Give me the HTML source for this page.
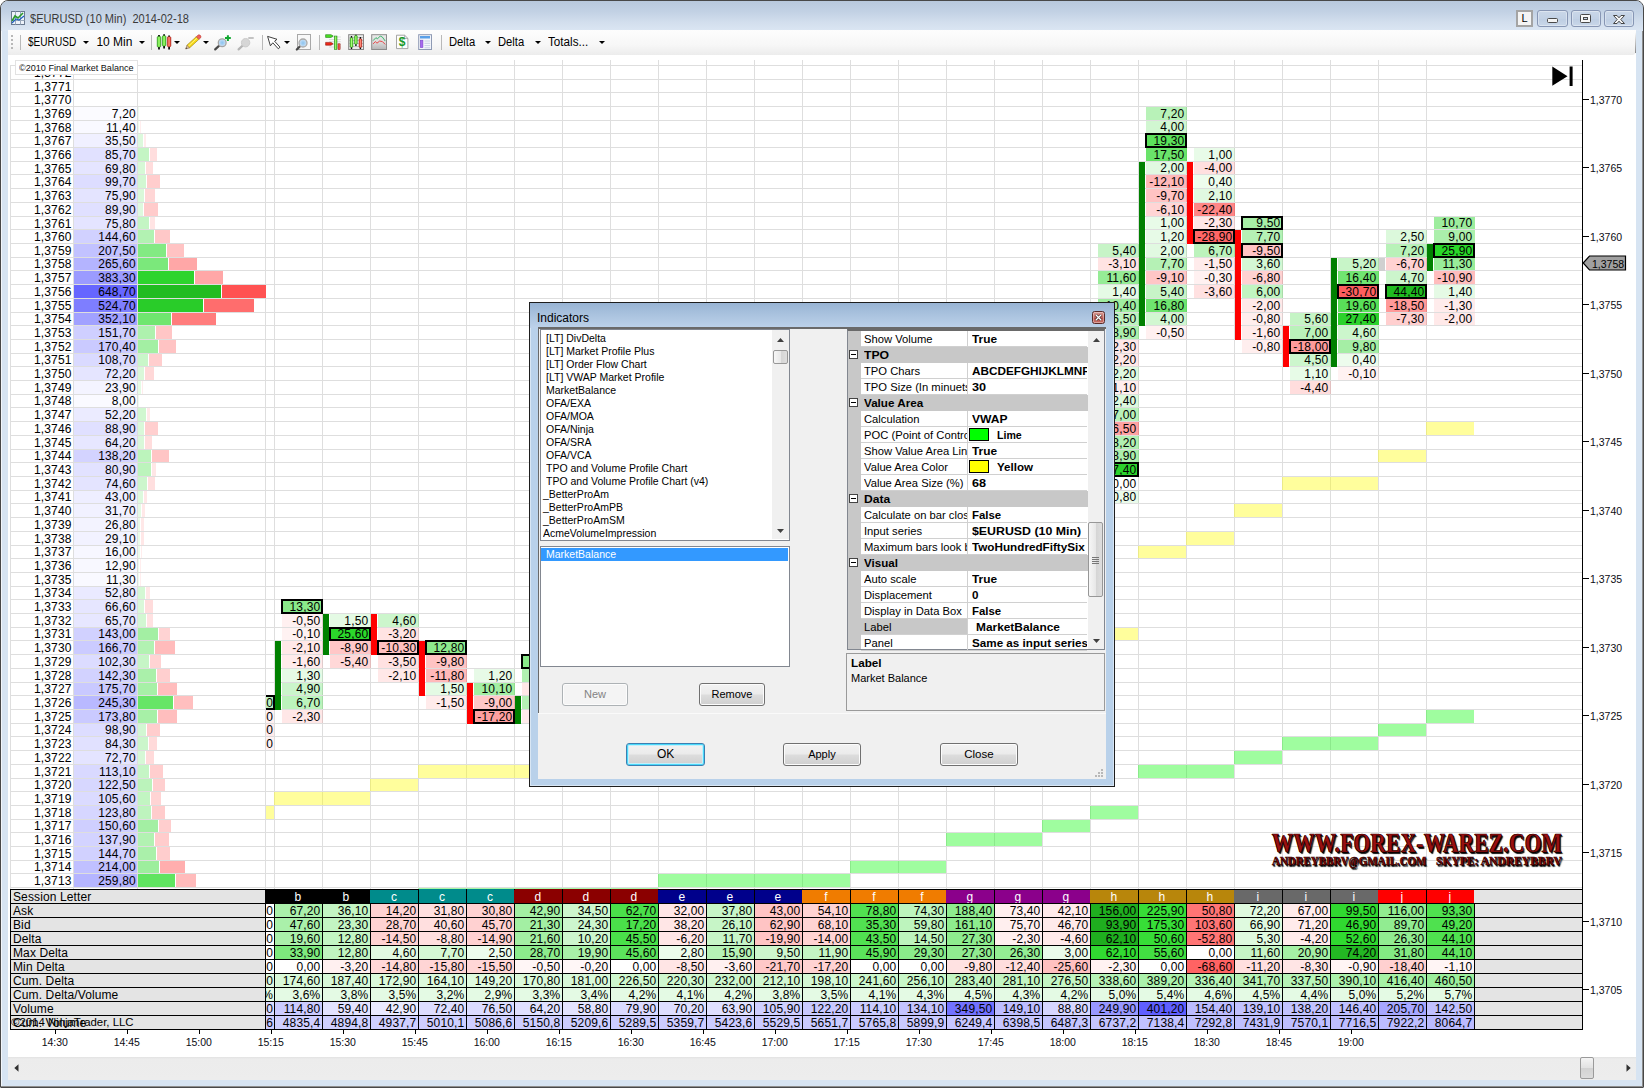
<!DOCTYPE html>
<html><head><meta charset="utf-8"><title>chart</title><style>
html,body{margin:0;padding:0;}
body{width:1644px;height:1088px;overflow:hidden;background:#fff;font-family:"Liberation Sans",sans-serif;position:relative;}
div{position:absolute;box-sizing:border-box;white-space:nowrap;}
svg{position:absolute;overflow:visible;}
.hl{left:10px;width:1572px;height:1px;background:#dedede;}
.vl{top:60px;width:1px;height:829px;background:#dedede;}
.lp{font-size:12px;letter-spacing:.15px;line-height:13.7px;height:13.7px;text-align:right;color:#000;padding-top:1.4px;}
.fc{font-size:12px;letter-spacing:.15px;line-height:13.7px;height:13.69px;text-align:right;color:#000;padding-right:2.4px;padding-top:1.0px;}
.bx{box-shadow:inset 0 0 0 1.6px #000,0 0 0 .6px #000;}
.tc{font-size:12px;letter-spacing:.15px;line-height:14px;height:14px;text-align:right;color:#000;padding-right:1.6px;}
.tl{font-size:12px;line-height:14px;height:14px;color:#000;letter-spacing:.12px;}
.ax{font-size:10.5px;line-height:12px;height:12px;color:#0c0c14;}
.tb{font-size:12px;line-height:14px;color:#000;transform-origin:0 50%;}
.li{font-size:11px;line-height:13px;height:13px;color:#000;transform:scaleX(.955);transform-origin:0 50%;}
.pn{font-size:11px;line-height:16px;height:16px;color:#000;}
.pv{font-size:11px;line-height:16px;height:16px;color:#000;font-weight:bold;}
.pv span{display:inline-block;transform-origin:0 50%;}
.btn{font-size:11px;line-height:21px;text-align:center;border:1px solid #707070;border-radius:3px;background:linear-gradient(#f2f2f2 0,#ebebeb 48%,#dddddd 52%,#cfcfcf 100%);color:#000;box-shadow:inset 0 0 0 1px #fcfcfc;}
</style></head><body>
<div style="left:0;top:0;width:1644px;height:1088px;border-radius:8px 8px 1px 1px;background:#d7e4f2;border:1px solid #484848;box-shadow:inset -1px -1px 0 #8e8e8e,inset 1px 0 0 #f2f6fb;"></div>
<div style="left:1px;top:1px;width:1642px;height:30px;border-radius:7px 7px 0 0;background:linear-gradient(#b8c8dc 0,#c2d1e4 35%,#d2deed 70%,#dbe6f3 100%);"></div>
<div style="left:8px;top:30px;width:1628px;height:1050px;background:#fff;"></div>
<svg style="left:11px;top:11px" width="14" height="14" viewBox="0 0 14 14"><rect x="0.5" y="0.5" width="13" height="13" fill="#eef3fa" stroke="#6a7a90"/><path d="M0.5 9.5H13.5M4.5 .5V13.5M9.5 .5V13.5" stroke="#9aa8bb" stroke-width="1" fill="none"/><path d="M1 10L4 5L7 7L12 2" stroke="#2a9a2a" stroke-width="1.6" fill="none"/><path d="M1 12L5 8L8 9L13 5" stroke="#2060c0" stroke-width="1.2" fill="none"/></svg>
<div class="tb" id="ttl" style="transform:scaleX(.92);left:30px;top:11.8px;color:#3a3a3a;font-size:12px;">$EURUSD (10 Min)&nbsp; 2014-02-18</div>
<div style="left:1516px;top:10px;width:17px;height:17px;border:2px solid #a4a4a4;background:#f4f4f4;font-size:11px;line-height:13px;text-align:center;color:#000;">L</div>
<div style="left:1537.0px;top:10px;width:30.5px;height:17px;border:1px solid #8796b4;border-radius:3px;background:linear-gradient(#cad7e8,#c2d1e5 50%,#bdcde2 51%,#c9d7e9);box-shadow:inset 0 0 0 1px rgba(255,255,255,.35);"><div style="left:9px;top:7px;width:11px;height:5px;border:1px solid #4a4a4a;background:#f4f4f4;border-radius:1.5px"></div></div>
<div style="left:1570.5px;top:10px;width:30.5px;height:17px;border:1px solid #8796b4;border-radius:3px;background:linear-gradient(#cad7e8,#c2d1e5 50%,#bdcde2 51%,#c9d7e9);box-shadow:inset 0 0 0 1px rgba(255,255,255,.35);"><div style="left:8px;top:3px;width:11px;height:9px;border:1px solid #4a4a4a;background:#f8f8f8;border-radius:1.5px"></div><div style="left:11px;top:6px;width:5px;height:3px;border:1px solid #4a4a4a;background:#c9d6e6"></div></div>
<div style="left:1603.5px;top:10px;width:30.5px;height:17px;border:1px solid #8796b4;border-radius:3px;background:linear-gradient(#cad7e8,#c2d1e5 50%,#bdcde2 51%,#c9d7e9);box-shadow:inset 0 0 0 1px rgba(255,255,255,.35);"><svg style="left:8.5px;top:3.5px" width="12" height="9" viewBox="0 0 12 9"><path d="M0.5 0.5H4L6 2.8L8 0.5H11.5L7.8 4.5L11.5 8.5H8L6 6.2L4 8.5H0.5L4.2 4.5Z" fill="#f6f6f6" stroke="#454545" stroke-width="1" stroke-linejoin="round"/></svg></div>
<div style="left:8px;top:30px;width:1628px;height:25px;background:linear-gradient(#fdfdfd 0,#f7f7f7 60%,#ececec 100%);border-radius:0 0 4px 0;"></div>
<div style="left:1635px;top:32px;width:1px;height:21px;background:linear-gradient(rgba(120,120,120,0),rgba(110,110,110,.8));"></div>
<div style="left:11px;top:35px;width:2px;height:2px;background:#b8b8b8;"></div>
<div style="left:11px;top:39px;width:2px;height:2px;background:#b8b8b8;"></div>
<div style="left:11px;top:43px;width:2px;height:2px;background:#b8b8b8;"></div>
<div style="left:11px;top:47px;width:2px;height:2px;background:#b8b8b8;"></div>
<div style="left:20.0px;top:35px;width:1px;height:15px;background:#b9b9b9;"></div>
<div class="tb" id="t1" style="transform:scaleX(.84);left:28px;top:35px;">$EURUSD</div>
<svg style="left:82.5px;top:40.8px" width="6" height="3" viewBox="0 0 6 3"><path d="M0 0H6L3 3Z" fill="#000"/></svg>
<div class="tb" id="t2" style="left:96.4px;top:35px;">10 Min</div>
<svg style="left:138.5px;top:40.8px" width="6" height="3" viewBox="0 0 6 3"><path d="M0 0H6L3 3Z" fill="#000"/></svg>
<div style="left:151.0px;top:35px;width:1px;height:15px;background:#b9b9b9;"></div>
<svg style="left:173.7px;top:40.8px" width="6" height="3" viewBox="0 0 6 3"><path d="M0 0H6L3 3Z" fill="#000"/></svg>
<svg style="left:202.8px;top:40.8px" width="6" height="3" viewBox="0 0 6 3"><path d="M0 0H6L3 3Z" fill="#000"/></svg>
<svg style="left:284.0px;top:40.8px" width="6" height="3" viewBox="0 0 6 3"><path d="M0 0H6L3 3Z" fill="#000"/></svg>
<div style="left:261.5px;top:35px;width:1px;height:15px;background:#b9b9b9;"></div>
<div style="left:319.3px;top:35px;width:1px;height:15px;background:#b9b9b9;"></div>
<svg style="left:150px;top:30px" width="290" height="25" viewBox="150 30 290 25">
<defs>
<linearGradient id="gg" x1="0" x2="1" y1="0" y2="0"><stop offset="0" stop-color="#3cc818"/><stop offset=".5" stop-color="#a8ff78"/><stop offset="1" stop-color="#3cc818"/></linearGradient>
<linearGradient id="rg" x1="0" x2="1" y1="0" y2="0"><stop offset="0" stop-color="#e02818"/><stop offset=".5" stop-color="#ff9080"/><stop offset="1" stop-color="#e02818"/></linearGradient>
<radialGradient id="lens"><stop offset="0" stop-color="#8cc4f0"/><stop offset=".7" stop-color="#b8d8f4"/><stop offset="1" stop-color="#e4ecf4"/></radialGradient>
<linearGradient id="gr3" x1="0" x2="0" y1="0" y2="1"><stop offset="0" stop-color="#ececec"/><stop offset=".55" stop-color="#d8d8d8"/><stop offset="1" stop-color="#b4b4b4"/></linearGradient>
</defs>
<g stroke="#111" stroke-width="1.8"><path d="M159 35V49.4M164.1 34.3V48.4M169.1 35.4V49.4"/></g>
<rect x="157.2" y="36.4" width="3.6" height="10.7" rx="1" fill="url(#gg)" stroke="#1c7a10" stroke-width=".5"/>
<rect x="162.3" y="35.7" width="3.6" height="10.3" rx="1" fill="url(#gg)" stroke="#1c7a10" stroke-width=".5"/>
<rect x="167.3" y="36.7" width="3.6" height="10" rx="1" fill="url(#rg)" stroke="#901810" stroke-width=".5"/>
<path d="M186.95 45.23L196.35 36.63L198.85 39.37L189.45 47.97Z" fill="#f8dc18" stroke="#a08410" stroke-width=".7"/>
<path d="M188.2 46.4L197.4 37.8" stroke="#fff08a" stroke-width=".9"/>
<path d="M185.6 49L186.95 45.23L189.45 47.97Z" fill="#dcc09a" stroke="#806040" stroke-width=".5"/>
<path d="M185.6 49L186.3 47.2L187.4 48.4Z" fill="#404040"/>
<path d="M196.35 36.63L198.2 34.9Q199.9 34.3 200.9 36.1L201 37.4L198.85 39.37Z" fill="#f06058" stroke="#b03028" stroke-width=".5"/>
<path d="M215.2 49.4L219.6 45.2" stroke="#484848" stroke-width="2.2" stroke-linecap="round"/>
<circle cx="222.2" cy="42.7" r="3.9" fill="url(#lens)" stroke="#a4a4a4" stroke-width="1.3"/>
<path d="M227.9 35.2V41M225 38.1H230.8" stroke="#10a830" stroke-width="2"/>
<path d="M238.6 49.4L243 45.2" stroke="#b4b4b4" stroke-width="2.2" stroke-linecap="round"/>
<circle cx="245.6" cy="42.7" r="4.2" fill="#d6d6d6" stroke="#cccccc" stroke-width="1"/>
<path d="M248.3 38H253.7" stroke="#bdbdbd" stroke-width="1.8"/>
<path d="M267.6 36.4L277 39.3L274.6 41.2L280 47.2L278.3 48.8L272.8 42.8L270.4 45.8Z" fill="#fff" stroke="#2a2a2a" stroke-width=".9" stroke-linejoin="round"/>
<rect x="297.5" y="34.5" width="13" height="15" fill="#f8f8f8" stroke="#a8a8a8"/>
<path d="M296.8 49.5L300 46.2" stroke="#484848" stroke-width="2.2" stroke-linecap="round"/>
<circle cx="303" cy="43" r="4" fill="url(#lens)" stroke="#a8a8a8" stroke-width="1.3"/>
<path d="M329 37H340.8M329 39.5H340.8M329 41.7H340.8M329 44.3H340.8M329 47H340.8" stroke="#d4d4d4" stroke-width=".8"/>
<path d="M325.6 34.7H331L333.2 36L331 37.4H325.6Z" fill="#4ce424" stroke="#1c7a10" stroke-width=".6" stroke-linejoin="round"/>
<path d="M325.6 42.4H331L333.2 43.8L331 45.2H325.6Z" fill="#f02818" stroke="#901810" stroke-width=".6" stroke-linejoin="round"/>
<rect x="334.4" y="36" width="2.6" height="13.6" fill="url(#gg)" stroke="#1c7a10" stroke-width=".5"/>
<rect x="338" y="43.8" width="2.1" height="5.8" fill="url(#rg)" stroke="#901810" stroke-width=".5"/>
<rect x="348.7" y="34.7" width="14.8" height="14.8" fill="#ebebeb" stroke="#858585"/>
<path d="M349.2 37.5H363M349.2 40.5H363M349.2 43.5H363M349.2 46.5H363" stroke="#b4b4b4" stroke-width=".8"/>
<g stroke="#111" stroke-width="1.4"><path d="M351.5 36V49M355.9 34.8V46M360.4 37V49"/></g>
<rect x="350.1" y="37.7" width="2.8" height="9.6" rx=".8" fill="url(#gg)" stroke="#1c7a10" stroke-width=".4"/>
<rect x="354.5" y="35.6" width="2.8" height="8.6" rx=".8" fill="url(#gg)" stroke="#1c7a10" stroke-width=".4"/>
<rect x="359" y="38.8" width="2.8" height="8.6" rx=".8" fill="url(#rg)" stroke="#901810" stroke-width=".4"/>
<rect x="371.7" y="34.7" width="14.8" height="14.8" fill="url(#gr3)" stroke="#8c8c8c"/>
<path d="M373.1 40.6L375.9 37.7L377.5 38.8L380.3 36L382.4 37.1L385.2 41" stroke="#28b060" stroke-width=".9" fill="none"/>
<path d="M373.1 43.9L375.3 41.6L377 43.2L379.7 41L382.4 41.6L385.2 44.4" stroke="#e83838" stroke-width=".9" fill="none"/>
<path d="M396.5 35.2H404.6L407.9 38.4V48.6H396.5Z" fill="#fdfdfd" stroke="#9c9c9c" stroke-width=".9"/>
<path d="M404.6 35.2V38.4H407.9" fill="none" stroke="#9c9c9c" stroke-width=".8"/>
<text x="402" y="46.3" font-family="Liberation Sans" font-size="12" font-weight="bold" fill="#189828" text-anchor="middle">$</text>
<rect x="418.7" y="34.7" width="12.8" height="14.8" fill="#f4f6fb" stroke="#8e9ab4"/>
<rect x="420" y="36" width="10" height="2.5" fill="#5aa0e8"/>
<rect x="420.3" y="40.2" width="2.6" height="7.4" fill="#a868f0" stroke="#7a48c8" stroke-width=".6"/>
<path d="M424.5 41H430.2M424.5 43.3H430.2M424.5 45.6H430.2M424.5 47.8H430.2" stroke="#c6d0e4" stroke-width="1"/>
</svg>
<div style="left:440.5px;top:35px;width:1px;height:15px;background:#b9b9b9;"></div>
<div class="tb" id="t3" style="transform:scaleX(.935);left:448.5px;top:35px;">Delta</div>
<svg style="left:484.7px;top:40.8px" width="6" height="3" viewBox="0 0 6 3"><path d="M0 0H6L3 3Z" fill="#000"/></svg>
<div class="tb" id="t4" style="transform:scaleX(.935);left:498.3px;top:35px;">Delta</div>
<svg style="left:534.5px;top:40.8px" width="6" height="3" viewBox="0 0 6 3"><path d="M0 0H6L3 3Z" fill="#000"/></svg>
<div class="tb" id="t5" style="transform:scaleX(.972);left:548.2px;top:35px;">Totals...</div>
<svg style="left:598.5px;top:40.8px" width="6" height="3" viewBox="0 0 6 3"><path d="M0 0H6L3 3Z" fill="#000"/></svg>
<div class="hl" style="top:65px"></div>
<div class="hl" style="top:79px"></div>
<div class="hl" style="top:92px"></div>
<div class="hl" style="top:106px"></div>
<div class="hl" style="top:120px"></div>
<div class="hl" style="top:133px"></div>
<div class="hl" style="top:147px"></div>
<div class="hl" style="top:161px"></div>
<div class="hl" style="top:174px"></div>
<div class="hl" style="top:188px"></div>
<div class="hl" style="top:202px"></div>
<div class="hl" style="top:216px"></div>
<div class="hl" style="top:229px"></div>
<div class="hl" style="top:243px"></div>
<div class="hl" style="top:257px"></div>
<div class="hl" style="top:270px"></div>
<div class="hl" style="top:284px"></div>
<div class="hl" style="top:298px"></div>
<div class="hl" style="top:312px"></div>
<div class="hl" style="top:325px"></div>
<div class="hl" style="top:339px"></div>
<div class="hl" style="top:353px"></div>
<div class="hl" style="top:366px"></div>
<div class="hl" style="top:380px"></div>
<div class="hl" style="top:394px"></div>
<div class="hl" style="top:407px"></div>
<div class="hl" style="top:421px"></div>
<div class="hl" style="top:435px"></div>
<div class="hl" style="top:449px"></div>
<div class="hl" style="top:462px"></div>
<div class="hl" style="top:476px"></div>
<div class="hl" style="top:490px"></div>
<div class="hl" style="top:503px"></div>
<div class="hl" style="top:517px"></div>
<div class="hl" style="top:531px"></div>
<div class="hl" style="top:545px"></div>
<div class="hl" style="top:558px"></div>
<div class="hl" style="top:572px"></div>
<div class="hl" style="top:586px"></div>
<div class="hl" style="top:599px"></div>
<div class="hl" style="top:613px"></div>
<div class="hl" style="top:627px"></div>
<div class="hl" style="top:640px"></div>
<div class="hl" style="top:654px"></div>
<div class="hl" style="top:668px"></div>
<div class="hl" style="top:682px"></div>
<div class="hl" style="top:695px"></div>
<div class="hl" style="top:709px"></div>
<div class="hl" style="top:723px"></div>
<div class="hl" style="top:736px"></div>
<div class="hl" style="top:750px"></div>
<div class="hl" style="top:764px"></div>
<div class="hl" style="top:778px"></div>
<div class="hl" style="top:791px"></div>
<div class="hl" style="top:805px"></div>
<div class="hl" style="top:819px"></div>
<div class="hl" style="top:832px"></div>
<div class="hl" style="top:846px"></div>
<div class="hl" style="top:860px"></div>
<div class="hl" style="top:873px"></div>
<div class="hl" style="top:887px"></div>
<div class="vl" style="left:265px"></div>
<div class="vl" style="left:274px"></div>
<div class="vl" style="left:322px"></div>
<div class="vl" style="left:370px"></div>
<div class="vl" style="left:418px"></div>
<div class="vl" style="left:466px"></div>
<div class="vl" style="left:514px"></div>
<div class="vl" style="left:562px"></div>
<div class="vl" style="left:610px"></div>
<div class="vl" style="left:658px"></div>
<div class="vl" style="left:706px"></div>
<div class="vl" style="left:754px"></div>
<div class="vl" style="left:802px"></div>
<div class="vl" style="left:850px"></div>
<div class="vl" style="left:898px"></div>
<div class="vl" style="left:946px"></div>
<div class="vl" style="left:994px"></div>
<div class="vl" style="left:1042px"></div>
<div class="vl" style="left:1090px"></div>
<div class="vl" style="left:1138px"></div>
<div class="vl" style="left:1186px"></div>
<div class="vl" style="left:1234px"></div>
<div class="vl" style="left:1282px"></div>
<div class="vl" style="left:1330px"></div>
<div class="vl" style="left:1378px"></div>
<div class="vl" style="left:1426px"></div>
<div class="vl" style="left:10px;top:65px;height:824px"></div>
<div class="vl" style="left:73px;top:65px;height:824px"></div>
<div class="vl" style="left:137px;top:65px;height:824px"></div>
<div style="left:1582px;top:60px;width:1px;height:970px;background:#000"></div>
<div class="lp" style="left:20px;top:65.7px;width:51.6px">1,3772</div>
<div class="lp" style="left:20px;top:79.2px;width:51.6px">1,3771</div>
<div class="lp" style="left:20px;top:92.7px;width:51.6px">1,3770</div>
<div class="lp" style="left:20px;top:106.7px;width:51.6px">1,3769</div>
<div style="left:74px;top:107px;width:63px;height:13px;background:#fbfbff"></div>
<div class="lp" style="left:74px;top:106.7px;width:63px;padding-right:1.2px;">7,20</div>
<div style="left:138px;top:107px;width:0.6px;height:13px;background:#eefcee"></div>
<div class="lp" style="left:20px;top:120.2px;width:51.6px">1,3768</div>
<div style="left:74px;top:121px;width:63px;height:12px;background:#f9f9ff"></div>
<div class="lp" style="left:74px;top:120.2px;width:63px;padding-right:1.2px;">11,40</div>
<div style="left:138px;top:121px;width:0.9px;height:12px;background:#edfced"></div>
<div style="left:139.9px;top:121px;width:0.6px;height:12px;background:#ffeeee"></div>
<div class="lp" style="left:20px;top:133.7px;width:51.6px">1,3767</div>
<div style="left:74px;top:134px;width:63px;height:13px;background:#f0f0ff"></div>
<div class="lp" style="left:74px;top:133.7px;width:63px;padding-right:1.2px;">35,50</div>
<div style="left:138px;top:134px;width:5.3px;height:13px;background:#dcf9dc"></div>
<div style="left:144.3px;top:134px;width:1.6px;height:13px;background:#ffecec"></div>
<div class="lp" style="left:20px;top:147.7px;width:51.6px">1,3766</div>
<div style="left:74px;top:148px;width:63px;height:13px;background:#e1e1ff"></div>
<div class="lp" style="left:74px;top:147.7px;width:63px;padding-right:1.2px;">85,70</div>
<div style="left:138px;top:148px;width:11.3px;height:13px;background:#c4f5c4"></div>
<div style="left:150.3px;top:148px;width:6.7px;height:13px;background:#ffdede"></div>
<div class="lp" style="left:20px;top:161.2px;width:51.6px">1,3765</div>
<div style="left:74px;top:162px;width:63px;height:12px;background:#e5e5ff"></div>
<div class="lp" style="left:74px;top:161.2px;width:63px;padding-right:1.2px;">69,80</div>
<div style="left:138px;top:162px;width:6.9px;height:12px;background:#d6f8d6"></div>
<div style="left:145.9px;top:162px;width:7.6px;height:12px;background:#ffdcdc"></div>
<div class="lp" style="left:20px;top:174.7px;width:51.6px">1,3764</div>
<div style="left:74px;top:175px;width:63px;height:13px;background:#ddddff"></div>
<div class="lp" style="left:74px;top:174.7px;width:63px;padding-right:1.2px;">99,70</div>
<div style="left:138px;top:175px;width:7.9px;height:13px;background:#d2f7d2"></div>
<div style="left:146.9px;top:175px;width:13.2px;height:13px;background:#ffcdcd"></div>
<div class="lp" style="left:20px;top:188.7px;width:51.6px">1,3763</div>
<div style="left:74px;top:189px;width:63px;height:13px;background:#e4e4ff"></div>
<div class="lp" style="left:74px;top:188.7px;width:63px;padding-right:1.2px;">75,90</div>
<div style="left:138px;top:189px;width:6.1px;height:13px;background:#d9f8d9"></div>
<div style="left:145.1px;top:189px;width:9.7px;height:13px;background:#ffd6d6"></div>
<div class="lp" style="left:20px;top:202.7px;width:51.6px">1,3762</div>
<div style="left:74px;top:203px;width:63px;height:13px;background:#e0e0ff"></div>
<div class="lp" style="left:74px;top:202.7px;width:63px;padding-right:1.2px;">89,90</div>
<div style="left:138px;top:203px;width:4.8px;height:13px;background:#def9de"></div>
<div style="left:143.8px;top:203px;width:14.2px;height:13px;background:#ffcbcb"></div>
<div class="lp" style="left:20px;top:216.2px;width:51.6px">1,3761</div>
<div style="left:74px;top:217px;width:63px;height:12px;background:#e4e4ff"></div>
<div class="lp" style="left:74px;top:216.2px;width:63px;padding-right:1.2px;">75,80</div>
<div style="left:138px;top:217px;width:11.3px;height:12px;background:#c4f5c4"></div>
<div style="left:150.3px;top:217px;width:4.5px;height:12px;background:#ffe4e4"></div>
<div class="lp" style="left:20px;top:229.7px;width:51.6px">1,3760</div>
<div style="left:74px;top:230px;width:63px;height:13px;background:#d1d1ff"></div>
<div class="lp" style="left:74px;top:229.7px;width:63px;padding-right:1.2px;">144,60</div>
<div style="left:138px;top:230px;width:15.9px;height:13px;background:#b2f2b2"></div>
<div style="left:154.9px;top:230px;width:15.2px;height:13px;background:#ffc8c8"></div>
<div class="lp" style="left:20px;top:243.7px;width:51.6px">1,3759</div>
<div style="left:74px;top:244px;width:63px;height:13px;background:#c2c2ff"></div>
<div class="lp" style="left:74px;top:243.7px;width:63px;padding-right:1.2px;">207,50</div>
<div style="left:138px;top:244px;width:28.0px;height:13px;background:#83ea83"></div>
<div style="left:167.0px;top:244px;width:17.1px;height:13px;background:#ffc3c3"></div>
<div class="lp" style="left:20px;top:257.1px;width:51.6px">1,3758</div>
<div style="left:74px;top:258px;width:63px;height:12px;background:#b4b4ff"></div>
<div class="lp" style="left:74px;top:257.1px;width:63px;padding-right:1.2px;">265,60</div>
<div style="left:138px;top:258px;width:30.0px;height:12px;background:#7be87b"></div>
<div style="left:169.0px;top:258px;width:28.0px;height:12px;background:#ffa7a7"></div>
<div class="lp" style="left:20px;top:270.6px;width:51.6px">1,3757</div>
<div style="left:74px;top:271px;width:63px;height:13px;background:#9b9bff"></div>
<div class="lp" style="left:74px;top:270.6px;width:63px;padding-right:1.2px;">383,30</div>
<div style="left:138px;top:271px;width:56.3px;height:13px;background:#2ed42e"></div>
<div style="left:195.3px;top:271px;width:27.8px;height:13px;background:#ffa7a7"></div>
<div class="lp" style="left:20px;top:284.6px;width:51.6px">1,3756</div>
<div style="left:74px;top:285px;width:63px;height:13px;background:#6666ff"></div>
<div class="lp" style="left:74px;top:284.6px;width:63px;padding-right:1.2px;">648,70</div>
<div style="left:138px;top:285px;width:82.5px;height:13px;background:#21bc21"></div>
<div style="left:221.5px;top:285px;width:44.0px;height:13px;background:#ff5252"></div>
<div class="lp" style="left:20px;top:298.6px;width:51.6px">1,3755</div>
<div style="left:74px;top:299px;width:63px;height:13px;background:#7e7eff"></div>
<div class="lp" style="left:74px;top:298.6px;width:63px;padding-right:1.2px;">524,70</div>
<div style="left:138px;top:299px;width:65.3px;height:13px;background:#29cc29"></div>
<div style="left:204.3px;top:299px;width:50.2px;height:13px;background:#ff6d6d"></div>
<div class="lp" style="left:20px;top:312.1px;width:51.6px">1,3754</div>
<div style="left:74px;top:313px;width:63px;height:12px;background:#a1a1ff"></div>
<div class="lp" style="left:74px;top:312.1px;width:63px;padding-right:1.2px;">352,10</div>
<div style="left:138px;top:313px;width:33.1px;height:12px;background:#6fe66f"></div>
<div style="left:172.1px;top:313px;width:44.1px;height:12px;background:#ff7d7d"></div>
<div class="lp" style="left:20px;top:325.6px;width:51.6px">1,3753</div>
<div style="left:74px;top:326px;width:63px;height:13px;background:#cfcfff"></div>
<div class="lp" style="left:74px;top:325.6px;width:63px;padding-right:1.2px;">151,70</div>
<div style="left:138px;top:326px;width:16.9px;height:13px;background:#aef1ae"></div>
<div style="left:155.9px;top:326px;width:15.8px;height:13px;background:#ffc6c6"></div>
<div class="lp" style="left:20px;top:339.6px;width:51.6px">1,3752</div>
<div style="left:74px;top:340px;width:63px;height:13px;background:#cacaff"></div>
<div class="lp" style="left:74px;top:339.6px;width:63px;padding-right:1.2px;">170,40</div>
<div style="left:138px;top:340px;width:19.7px;height:13px;background:#a3efa3"></div>
<div style="left:158.7px;top:340px;width:17.1px;height:13px;background:#ffc3c3"></div>
<div class="lp" style="left:20px;top:353.1px;width:51.6px">1,3751</div>
<div style="left:74px;top:354px;width:63px;height:12px;background:#dadaff"></div>
<div class="lp" style="left:74px;top:353.1px;width:63px;padding-right:1.2px;">108,70</div>
<div style="left:138px;top:354px;width:10.2px;height:12px;background:#c9f6c9"></div>
<div style="left:149.2px;top:354px;width:12.9px;height:12px;background:#ffcece"></div>
<div class="lp" style="left:20px;top:366.6px;width:51.6px">1,3750</div>
<div style="left:74px;top:367px;width:63px;height:13px;background:#e5e5ff"></div>
<div class="lp" style="left:74px;top:366.6px;width:63px;padding-right:1.2px;">72,20</div>
<div style="left:138px;top:367px;width:6.1px;height:13px;background:#d9f8d9"></div>
<div style="left:145.1px;top:367px;width:8.9px;height:13px;background:#ffd8d8"></div>
<div class="lp" style="left:20px;top:380.6px;width:51.6px">1,3749</div>
<div style="left:74px;top:381px;width:63px;height:13px;background:#f4f4ff"></div>
<div class="lp" style="left:74px;top:380.6px;width:63px;padding-right:1.2px;">23,90</div>
<div style="left:138px;top:381px;width:3.0px;height:13px;background:#e5fbe5"></div>
<div style="left:142.0px;top:381px;width:1.3px;height:13px;background:#ffecec"></div>
<div class="lp" style="left:20px;top:394.1px;width:51.6px">1,3748</div>
<div style="left:74px;top:395px;width:63px;height:12px;background:#fafaff"></div>
<div class="lp" style="left:74px;top:394.1px;width:63px;padding-right:1.2px;">8,00</div>
<div style="left:138px;top:395px;width:0.8px;height:12px;background:#eefcee"></div>
<div class="lp" style="left:20px;top:407.6px;width:51.6px">1,3747</div>
<div style="left:74px;top:408px;width:63px;height:13px;background:#ebebff"></div>
<div class="lp" style="left:74px;top:407.6px;width:63px;padding-right:1.2px;">52,20</div>
<div style="left:138px;top:408px;width:8.2px;height:13px;background:#d0f7d0"></div>
<div style="left:147.2px;top:408px;width:2.4px;height:13px;background:#ffe9e9"></div>
<div class="lp" style="left:20px;top:421.6px;width:51.6px">1,3746</div>
<div style="left:74px;top:422px;width:63px;height:13px;background:#e0e0ff"></div>
<div class="lp" style="left:74px;top:421.6px;width:63px;padding-right:1.2px;">88,90</div>
<div style="left:138px;top:422px;width:6.1px;height:13px;background:#d9f8d9"></div>
<div style="left:145.1px;top:422px;width:12.6px;height:13px;background:#ffcfcf"></div>
<div class="lp" style="left:20px;top:435.6px;width:51.6px">1,3745</div>
<div style="left:74px;top:436px;width:63px;height:13px;background:#e7e7ff"></div>
<div class="lp" style="left:74px;top:435.6px;width:63px;padding-right:1.2px;">64,20</div>
<div style="left:138px;top:436px;width:6.1px;height:13px;background:#d9f8d9"></div>
<div style="left:145.1px;top:436px;width:7.2px;height:13px;background:#ffdddd"></div>
<div class="lp" style="left:20px;top:449.1px;width:51.6px">1,3744</div>
<div style="left:74px;top:450px;width:63px;height:12px;background:#d3d3ff"></div>
<div class="lp" style="left:74px;top:449.1px;width:63px;padding-right:1.2px;">138,20</div>
<div style="left:138px;top:450px;width:13.3px;height:12px;background:#bcf4bc"></div>
<div style="left:152.3px;top:450px;width:16.4px;height:12px;background:#ffc5c5"></div>
<div class="lp" style="left:20px;top:462.6px;width:51.6px">1,3743</div>
<div style="left:74px;top:463px;width:63px;height:13px;background:#e2e2ff"></div>
<div class="lp" style="left:74px;top:462.6px;width:63px;padding-right:1.2px;">80,90</div>
<div style="left:138px;top:463px;width:13.3px;height:13px;background:#bcf4bc"></div>
<div style="left:152.3px;top:463px;width:3.7px;height:13px;background:#ffe6e6"></div>
<div class="lp" style="left:20px;top:476.6px;width:51.6px">1,3742</div>
<div style="left:74px;top:477px;width:63px;height:13px;background:#e4e4ff"></div>
<div class="lp" style="left:74px;top:476.6px;width:63px;padding-right:1.2px;">74,60</div>
<div style="left:138px;top:477px;width:9.2px;height:13px;background:#ccf6cc"></div>
<div style="left:148.2px;top:477px;width:6.4px;height:13px;background:#ffdfdf"></div>
<div class="lp" style="left:20px;top:490.1px;width:51.6px">1,3741</div>
<div style="left:74px;top:491px;width:63px;height:12px;background:#eeeeff"></div>
<div class="lp" style="left:74px;top:490.1px;width:63px;padding-right:1.2px;">43,00</div>
<div style="left:138px;top:491px;width:5.1px;height:12px;background:#ddf9dd"></div>
<div style="left:144.1px;top:491px;width:3.4px;height:12px;background:#ffe7e7"></div>
<div class="lp" style="left:20px;top:503.6px;width:51.6px">1,3740</div>
<div style="left:74px;top:504px;width:63px;height:13px;background:#f1f1ff"></div>
<div class="lp" style="left:74px;top:503.6px;width:63px;padding-right:1.2px;">31,70</div>
<div style="left:138px;top:504px;width:3.3px;height:13px;background:#e4fae4"></div>
<div style="left:142.3px;top:504px;width:2.7px;height:13px;background:#ffe8e8"></div>
<div class="lp" style="left:20px;top:517.6px;width:51.6px">1,3739</div>
<div style="left:74px;top:518px;width:63px;height:13px;background:#f3f3ff"></div>
<div class="lp" style="left:74px;top:517.6px;width:63px;padding-right:1.2px;">26,80</div>
<div style="left:138px;top:518px;width:2.2px;height:13px;background:#e8fbe8"></div>
<div style="left:141.2px;top:518px;width:2.7px;height:13px;background:#ffe8e8"></div>
<div class="lp" style="left:20px;top:531.6px;width:51.6px">1,3738</div>
<div style="left:74px;top:532px;width:63px;height:13px;background:#f2f2ff"></div>
<div class="lp" style="left:74px;top:531.6px;width:63px;padding-right:1.2px;">29,10</div>
<div style="left:138px;top:532px;width:2.2px;height:13px;background:#e8fbe8"></div>
<div style="left:141.2px;top:532px;width:3.3px;height:13px;background:#ffe7e7"></div>
<div class="lp" style="left:20px;top:545.1px;width:51.6px">1,3737</div>
<div style="left:74px;top:546px;width:63px;height:12px;background:#f7f7ff"></div>
<div class="lp" style="left:74px;top:545.1px;width:63px;padding-right:1.2px;">16,00</div>
<div style="left:138px;top:546px;width:1.5px;height:12px;background:#ebfceb"></div>
<div style="left:140.5px;top:546px;width:1.1px;height:12px;background:#ffeded"></div>
<div class="lp" style="left:20px;top:558.6px;width:51.6px">1,3736</div>
<div style="left:74px;top:559px;width:63px;height:13px;background:#f8f8ff"></div>
<div class="lp" style="left:74px;top:558.6px;width:63px;padding-right:1.2px;">12,90</div>
<div style="left:138px;top:559px;width:1.2px;height:13px;background:#ecfcec"></div>
<div style="left:140.2px;top:559px;width:0.7px;height:13px;background:#ffeeee"></div>
<div class="lp" style="left:20px;top:572.6px;width:51.6px">1,3735</div>
<div style="left:74px;top:573px;width:63px;height:13px;background:#f9f9ff"></div>
<div class="lp" style="left:74px;top:572.6px;width:63px;padding-right:1.2px;">11,30</div>
<div style="left:138px;top:573px;width:1.0px;height:13px;background:#edfced"></div>
<div style="left:140.0px;top:573px;width:0.5px;height:13px;background:#ffeeee"></div>
<div class="lp" style="left:20px;top:586.1px;width:51.6px">1,3734</div>
<div style="left:74px;top:587px;width:63px;height:12px;background:#eaeaff"></div>
<div class="lp" style="left:74px;top:586.1px;width:63px;padding-right:1.2px;">52,80</div>
<div style="left:138px;top:587px;width:7.4px;height:12px;background:#d4f8d4"></div>
<div style="left:146.4px;top:587px;width:3.3px;height:12px;background:#ffe7e7"></div>
<div class="lp" style="left:20px;top:599.6px;width:51.6px">1,3733</div>
<div style="left:74px;top:600px;width:63px;height:13px;background:#e6e6ff"></div>
<div class="lp" style="left:74px;top:599.6px;width:63px;padding-right:1.2px;">66,60</div>
<div style="left:138px;top:600px;width:6.1px;height:13px;background:#d9f8d9"></div>
<div style="left:145.1px;top:600px;width:7.7px;height:13px;background:#ffdcdc"></div>
<div class="lp" style="left:20px;top:613.6px;width:51.6px">1,3732</div>
<div style="left:74px;top:614px;width:63px;height:13px;background:#e7e7ff"></div>
<div class="lp" style="left:74px;top:613.6px;width:63px;padding-right:1.2px;">65,70</div>
<div style="left:138px;top:614px;width:7.8px;height:13px;background:#d2f7d2"></div>
<div style="left:146.8px;top:614px;width:5.8px;height:13px;background:#ffe1e1"></div>
<div class="lp" style="left:20px;top:627.1px;width:51.6px">1,3731</div>
<div style="left:74px;top:628px;width:63px;height:12px;background:#d1d1ff"></div>
<div class="lp" style="left:74px;top:627.1px;width:63px;padding-right:1.2px;">143,00</div>
<div style="left:138px;top:628px;width:19.7px;height:12px;background:#a3efa3"></div>
<div style="left:158.7px;top:628px;width:11.0px;height:12px;background:#ffd3d3"></div>
<div class="lp" style="left:20px;top:640.6px;width:51.6px">1,3730</div>
<div style="left:74px;top:641px;width:63px;height:13px;background:#cbcbff"></div>
<div class="lp" style="left:74px;top:640.6px;width:63px;padding-right:1.2px;">166,70</div>
<div style="left:138px;top:641px;width:16.0px;height:13px;background:#b2f2b2"></div>
<div style="left:155.0px;top:641px;width:20.0px;height:13px;background:#ffbbbb"></div>
<div class="lp" style="left:20px;top:654.6px;width:51.6px">1,3729</div>
<div style="left:74px;top:655px;width:63px;height:13px;background:#dcdcff"></div>
<div class="lp" style="left:74px;top:654.6px;width:63px;padding-right:1.2px;">102,30</div>
<div style="left:138px;top:655px;width:10.8px;height:13px;background:#c6f5c6"></div>
<div style="left:149.8px;top:655px;width:10.9px;height:13px;background:#ffd3d3"></div>
<div class="lp" style="left:20px;top:668.6px;width:51.6px">1,3728</div>
<div style="left:74px;top:669px;width:63px;height:13px;background:#d2d2ff"></div>
<div class="lp" style="left:74px;top:668.6px;width:63px;padding-right:1.2px;">142,30</div>
<div style="left:138px;top:669px;width:18.0px;height:13px;background:#aaf0aa"></div>
<div style="left:157.0px;top:669px;width:12.6px;height:13px;background:#ffcfcf"></div>
<div class="lp" style="left:20px;top:682.1px;width:51.6px">1,3727</div>
<div style="left:74px;top:683px;width:63px;height:12px;background:#c9c9ff"></div>
<div class="lp" style="left:74px;top:682.1px;width:63px;padding-right:1.2px;">175,70</div>
<div style="left:138px;top:683px;width:18.7px;height:12px;background:#a7f0a7"></div>
<div style="left:157.7px;top:683px;width:19.3px;height:12px;background:#ffbdbd"></div>
<div class="lp" style="left:20px;top:695.6px;width:51.6px">1,3726</div>
<div style="left:74px;top:696px;width:63px;height:13px;background:#b9b9ff"></div>
<div class="lp" style="left:74px;top:695.6px;width:63px;padding-right:1.2px;">245,30</div>
<div style="left:138px;top:696px;width:35.0px;height:13px;background:#67e567"></div>
<div style="left:174.0px;top:696px;width:18.5px;height:13px;background:#ffbfbf"></div>
<div class="lp" style="left:20px;top:709.6px;width:51.6px">1,3725</div>
<div style="left:74px;top:710px;width:63px;height:13px;background:#cacaff"></div>
<div class="lp" style="left:74px;top:709.6px;width:63px;padding-right:1.2px;">173,80</div>
<div style="left:138px;top:710px;width:18.7px;height:13px;background:#a7f0a7"></div>
<div style="left:157.7px;top:710px;width:18.9px;height:13px;background:#ffbebe"></div>
<div class="lp" style="left:20px;top:723.1px;width:51.6px">1,3724</div>
<div style="left:74px;top:724px;width:63px;height:12px;background:#ddddff"></div>
<div class="lp" style="left:74px;top:723.1px;width:63px;padding-right:1.2px;">98,90</div>
<div style="left:138px;top:724px;width:7.8px;height:12px;background:#d2f7d2"></div>
<div style="left:146.8px;top:724px;width:13.2px;height:12px;background:#ffcdcd"></div>
<div class="lp" style="left:20px;top:736.6px;width:51.6px">1,3723</div>
<div style="left:74px;top:737px;width:63px;height:13px;background:#e1e1ff"></div>
<div class="lp" style="left:74px;top:736.6px;width:63px;padding-right:1.2px;">84,30</div>
<div style="left:138px;top:737px;width:9.5px;height:13px;background:#cbf6cb"></div>
<div style="left:148.5px;top:737px;width:8.2px;height:13px;background:#ffdada"></div>
<div class="lp" style="left:20px;top:750.6px;width:51.6px">1,3722</div>
<div style="left:74px;top:751px;width:63px;height:13px;background:#e4e4ff"></div>
<div class="lp" style="left:74px;top:750.6px;width:63px;padding-right:1.2px;">72,70</div>
<div style="left:138px;top:751px;width:6.8px;height:13px;background:#d6f8d6"></div>
<div style="left:145.8px;top:751px;width:8.3px;height:13px;background:#ffdada"></div>
<div class="lp" style="left:20px;top:764.6px;width:51.6px">1,3721</div>
<div style="left:74px;top:765px;width:63px;height:13px;background:#d9d9ff"></div>
<div class="lp" style="left:74px;top:764.6px;width:63px;padding-right:1.2px;">113,10</div>
<div style="left:138px;top:765px;width:11.2px;height:13px;background:#c5f5c5"></div>
<div style="left:150.2px;top:765px;width:12.9px;height:13px;background:#ffcece"></div>
<div class="lp" style="left:20px;top:778.1px;width:51.6px">1,3720</div>
<div style="left:74px;top:779px;width:63px;height:12px;background:#d7d7ff"></div>
<div class="lp" style="left:74px;top:778.1px;width:63px;padding-right:1.2px;">122,50</div>
<div style="left:138px;top:779px;width:13.6px;height:12px;background:#bbf3bb"></div>
<div style="left:152.6px;top:779px;width:12.6px;height:12px;background:#ffcfcf"></div>
<div class="lp" style="left:20px;top:791.6px;width:51.6px">1,3719</div>
<div style="left:74px;top:792px;width:63px;height:13px;background:#dbdbff"></div>
<div class="lp" style="left:74px;top:791.6px;width:63px;padding-right:1.2px;">105,60</div>
<div style="left:138px;top:792px;width:11.9px;height:13px;background:#c2f5c2"></div>
<div style="left:150.9px;top:792px;width:10.5px;height:13px;background:#ffd4d4"></div>
<div class="lp" style="left:20px;top:805.6px;width:51.6px">1,3718</div>
<div style="left:74px;top:806px;width:63px;height:13px;background:#d6d6ff"></div>
<div class="lp" style="left:74px;top:805.6px;width:63px;padding-right:1.2px;">123,80</div>
<div style="left:138px;top:806px;width:12.9px;height:13px;background:#bef4be"></div>
<div style="left:151.9px;top:806px;width:13.6px;height:13px;background:#ffcccc"></div>
<div class="lp" style="left:20px;top:819.1px;width:51.6px">1,3717</div>
<div style="left:74px;top:820px;width:63px;height:12px;background:#cfcfff"></div>
<div class="lp" style="left:74px;top:819.1px;width:63px;padding-right:1.2px;">150,60</div>
<div style="left:138px;top:820px;width:19.7px;height:12px;background:#a3efa3"></div>
<div style="left:158.7px;top:820px;width:12.7px;height:12px;background:#ffcece"></div>
<div class="lp" style="left:20px;top:832.6px;width:51.6px">1,3716</div>
<div style="left:74px;top:833px;width:63px;height:13px;background:#d3d3ff"></div>
<div class="lp" style="left:74px;top:832.6px;width:63px;padding-right:1.2px;">137,90</div>
<div style="left:138px;top:833px;width:16.0px;height:13px;background:#b2f2b2"></div>
<div style="left:155.0px;top:833px;width:13.6px;height:13px;background:#ffcccc"></div>
<div class="lp" style="left:20px;top:846.6px;width:51.6px">1,3715</div>
<div style="left:74px;top:847px;width:63px;height:13px;background:#d1d1ff"></div>
<div class="lp" style="left:74px;top:846.6px;width:63px;padding-right:1.2px;">144,70</div>
<div style="left:138px;top:847px;width:18.0px;height:13px;background:#aaf0aa"></div>
<div style="left:157.0px;top:847px;width:13.1px;height:13px;background:#ffcdcd"></div>
<div class="lp" style="left:20px;top:860.1px;width:51.6px">1,3714</div>
<div style="left:74px;top:861px;width:63px;height:12px;background:#c0c0ff"></div>
<div class="lp" style="left:74px;top:860.1px;width:63px;padding-right:1.2px;">214,00</div>
<div style="left:138px;top:861px;width:21.4px;height:12px;background:#9dee9d"></div>
<div style="left:160.4px;top:861px;width:25.1px;height:12px;background:#ffaeae"></div>
<div class="lp" style="left:20px;top:873.6px;width:51.6px">1,3713</div>
<div style="left:74px;top:874px;width:63px;height:13px;background:#b5b5ff"></div>
<div class="lp" style="left:74px;top:873.6px;width:63px;padding-right:1.2px;">259,80</div>
<div style="left:138px;top:874px;width:36.7px;height:13px;background:#60e460"></div>
<div style="left:175.7px;top:874px;width:20.0px;height:13px;background:#ffbbbb"></div>
<div style="left:15px;top:60px;width:123px;height:15px;background:#fff;border:1px solid #e2e2e2;font-size:9.5px;line-height:13px;padding-left:3px;color:#111;"><span id="lb" style="display:inline-block;transform:scaleX(.955);transform-origin:0 50%">©2010 Final Market Balance</span></div>
<div style="left:266px;top:806px;width:8px;height:13px;background:rgba(255,252,0,0.39)"></div>
<div style="left:274px;top:792px;width:96px;height:13px;background:rgba(255,252,0,0.39)"></div>
<div style="left:370px;top:779px;width:48px;height:12px;background:rgba(255,252,0,0.39)"></div>
<div style="left:418px;top:765px;width:144px;height:13px;background:rgba(255,252,0,0.39)"></div>
<div style="left:1090px;top:628px;width:48px;height:12px;background:rgba(255,252,0,0.39)"></div>
<div style="left:1138px;top:546px;width:48px;height:12px;background:rgba(255,252,0,0.39)"></div>
<div style="left:1186px;top:532px;width:48px;height:13px;background:rgba(255,252,0,0.39)"></div>
<div style="left:1234px;top:504px;width:48px;height:13px;background:rgba(255,252,0,0.39)"></div>
<div style="left:1282px;top:477px;width:96px;height:13px;background:rgba(255,252,0,0.39)"></div>
<div style="left:1378px;top:450px;width:48px;height:12px;background:rgba(255,252,0,0.39)"></div>
<div style="left:1426px;top:422px;width:48px;height:13px;background:rgba(255,252,0,0.39)"></div>
<div style="left:658px;top:874px;width:192px;height:13px;background:rgba(5,250,5,0.385)"></div>
<div style="left:850px;top:861px;width:96px;height:12px;background:rgba(5,250,5,0.385)"></div>
<div style="left:946px;top:833px;width:96px;height:13px;background:rgba(5,250,5,0.385)"></div>
<div style="left:1042px;top:820px;width:48px;height:12px;background:rgba(5,250,5,0.385)"></div>
<div style="left:1090px;top:806px;width:48px;height:13px;background:rgba(5,250,5,0.385)"></div>
<div style="left:1138px;top:765px;width:96px;height:13px;background:rgba(5,250,5,0.385)"></div>
<div style="left:1234px;top:751px;width:48px;height:13px;background:rgba(5,250,5,0.385)"></div>
<div style="left:1282px;top:737px;width:96px;height:13px;background:rgba(5,250,5,0.385)"></div>
<div style="left:1378px;top:724px;width:48px;height:12px;background:rgba(5,250,5,0.385)"></div>
<div style="left:1426px;top:710px;width:48px;height:13px;background:rgba(5,250,5,0.385)"></div>
<div style="left:281.2px;top:599px;width:41.7px;height:15px;background:rgba(40,215,40,0.546);border:2px solid #000"></div>
<div class="fc" style="left:281.5px;top:599.65px;width:41.2px;">13,30</div>
<div style="left:281.5px;top:614px;width:41.2px;height:13px;background:rgba(255,0,0,0.060)"></div>
<div class="fc" style="left:281.5px;top:613.65px;width:41.2px;">-0,50</div>
<div style="left:281.5px;top:628px;width:41.2px;height:12px;background:rgba(255,0,0,0.052)"></div>
<div class="fc" style="left:281.5px;top:627.15px;width:41.2px;">-0,10</div>
<div style="left:281.5px;top:641px;width:41.2px;height:13px;background:rgba(255,0,0,0.090)"></div>
<div class="fc" style="left:281.5px;top:640.65px;width:41.2px;">-2,10</div>
<div style="left:281.5px;top:655px;width:41.2px;height:13px;background:rgba(255,0,0,0.080)"></div>
<div class="fc" style="left:281.5px;top:654.65px;width:41.2px;">-1,60</div>
<div style="left:281.5px;top:669px;width:41.2px;height:13px;background:rgba(40,215,40,0.117)"></div>
<div class="fc" style="left:281.5px;top:668.65px;width:41.2px;">1,30</div>
<div style="left:281.5px;top:683px;width:41.2px;height:12px;background:rgba(40,215,40,0.245)"></div>
<div class="fc" style="left:281.5px;top:682.15px;width:41.2px;">4,90</div>
<div style="left:281.5px;top:696px;width:41.2px;height:13px;background:rgba(40,215,40,0.310)"></div>
<div class="fc" style="left:281.5px;top:695.65px;width:41.2px;">6,70</div>
<div style="left:281.5px;top:710px;width:41.2px;height:13px;background:rgba(255,0,0,0.094)"></div>
<div class="fc" style="left:281.5px;top:709.65px;width:41.2px;">-2,30</div>
<div style="left:275.1px;top:641px;width:5.8px;height:69px;background:#008000"></div>
<div style="left:329.5px;top:614px;width:41.2px;height:13px;background:rgba(40,215,40,0.124)"></div>
<div class="fc" style="left:329.5px;top:613.65px;width:41.2px;">1,50</div>
<div style="left:329.2px;top:627px;width:41.7px;height:14px;background:rgba(40,215,40,0.986);border:2px solid #000"></div>
<div class="fc" style="left:329.5px;top:627.15px;width:41.2px;">25,60</div>
<div style="left:329.5px;top:641px;width:41.2px;height:13px;background:rgba(255,0,0,0.219)"></div>
<div class="fc" style="left:329.5px;top:640.65px;width:41.2px;">-8,90</div>
<div style="left:329.5px;top:655px;width:41.2px;height:13px;background:rgba(255,0,0,0.153)"></div>
<div class="fc" style="left:329.5px;top:654.65px;width:41.2px;">-5,40</div>
<div style="left:323.1px;top:614px;width:5.8px;height:41px;background:#008000"></div>
<div style="left:377.5px;top:614px;width:41.2px;height:13px;background:rgba(40,215,40,0.235)"></div>
<div class="fc" style="left:377.5px;top:613.65px;width:41.2px;">4,60</div>
<div style="left:377.5px;top:628px;width:41.2px;height:12px;background:rgba(255,0,0,0.111)"></div>
<div class="fc" style="left:377.5px;top:627.15px;width:41.2px;">-3,20</div>
<div style="left:377.2px;top:640px;width:41.7px;height:15px;background:rgba(255,0,0,0.246);border:2px solid #000"></div>
<div class="fc" style="left:377.5px;top:640.65px;width:41.2px;">-10,30</div>
<div style="left:377.5px;top:655px;width:41.2px;height:13px;background:rgba(255,0,0,0.116)"></div>
<div class="fc" style="left:377.5px;top:654.65px;width:41.2px;">-3,50</div>
<div style="left:377.5px;top:669px;width:41.2px;height:13px;background:rgba(255,0,0,0.090)"></div>
<div class="fc" style="left:377.5px;top:668.65px;width:41.2px;">-2,10</div>
<div style="left:371.1px;top:614px;width:5.8px;height:41px;background:#ff0000"></div>
<div style="left:425.2px;top:640px;width:41.7px;height:15px;background:rgba(40,215,40,0.528);border:2px solid #000"></div>
<div class="fc" style="left:425.5px;top:640.65px;width:41.2px;">12,80</div>
<div style="left:425.5px;top:655px;width:41.2px;height:13px;background:rgba(255,0,0,0.236)"></div>
<div class="fc" style="left:425.5px;top:654.65px;width:41.2px;">-9,80</div>
<div style="left:425.5px;top:669px;width:41.2px;height:13px;background:rgba(255,0,0,0.274)"></div>
<div class="fc" style="left:425.5px;top:668.65px;width:41.2px;">-11,80</div>
<div style="left:425.5px;top:683px;width:41.2px;height:12px;background:rgba(40,215,40,0.124)"></div>
<div class="fc" style="left:425.5px;top:682.15px;width:41.2px;">1,50</div>
<div style="left:425.5px;top:696px;width:41.2px;height:13px;background:rgba(255,0,0,0.079)"></div>
<div class="fc" style="left:425.5px;top:695.65px;width:41.2px;">-1,50</div>
<div style="left:419.1px;top:641px;width:5.8px;height:55px;background:#ff0000"></div>
<div style="left:473.5px;top:669px;width:41.2px;height:13px;background:rgba(40,215,40,0.113)"></div>
<div class="fc" style="left:473.5px;top:668.65px;width:41.2px;">1,20</div>
<div style="left:473.5px;top:683px;width:41.2px;height:12px;background:rgba(40,215,40,0.431)"></div>
<div class="fc" style="left:473.5px;top:682.15px;width:41.2px;">10,10</div>
<div style="left:473.5px;top:696px;width:41.2px;height:13px;background:rgba(255,0,0,0.221)"></div>
<div class="fc" style="left:473.5px;top:695.65px;width:41.2px;">-9,00</div>
<div style="left:473.2px;top:709px;width:41.7px;height:15px;background:rgba(255,0,0,0.377);border:2px solid #000"></div>
<div class="fc" style="left:473.5px;top:709.65px;width:41.2px;">-17,20</div>
<div style="left:467.1px;top:683px;width:5.8px;height:41px;background:#ff0000"></div>
<div style="left:521.2px;top:654px;width:41.7px;height:15px;background:rgba(40,215,40,0.539);border:2px solid #000"></div>
<div class="fc" style="left:521.5px;top:654.65px;width:41.2px;">13,10</div>
<div style="left:521.5px;top:669px;width:41.2px;height:13px;background:rgba(40,215,40,0.363)"></div>
<div class="fc" style="left:521.5px;top:668.65px;width:41.2px;">8,20</div>
<div style="left:521.5px;top:683px;width:41.2px;height:12px;background:rgba(255,0,0,0.096)"></div>
<div class="fc" style="left:521.5px;top:682.15px;width:41.2px;">-2,40</div>
<div style="left:521.5px;top:696px;width:41.2px;height:13px;background:rgba(40,215,40,0.342)"></div>
<div class="fc" style="left:521.5px;top:695.65px;width:41.2px;">7,60</div>
<div style="left:521.5px;top:710px;width:41.2px;height:13px;background:rgba(255,0,0,0.073)"></div>
<div class="fc" style="left:521.5px;top:709.65px;width:41.2px;">-1,20</div>
<div style="left:515.1px;top:696px;width:5.8px;height:28px;background:#008000"></div>
<div style="left:1097.5px;top:244px;width:41.2px;height:13px;background:rgba(40,215,40,0.263)"></div>
<div class="fc" style="left:1097.5px;top:243.65px;width:41.2px;">5,40</div>
<div style="left:1097.5px;top:258px;width:41.2px;height:12px;background:rgba(255,0,0,0.109)"></div>
<div class="fc" style="left:1097.5px;top:257.15px;width:41.2px;">-3,10</div>
<div style="left:1097.5px;top:271px;width:41.2px;height:13px;background:rgba(40,215,40,0.485)"></div>
<div class="fc" style="left:1097.5px;top:270.65px;width:41.2px;">11,60</div>
<div style="left:1097.5px;top:285px;width:41.2px;height:13px;background:rgba(40,215,40,0.120)"></div>
<div class="fc" style="left:1097.5px;top:284.65px;width:41.2px;">1,40</div>
<div style="left:1097.5px;top:299px;width:41.2px;height:13px;background:rgba(40,215,40,0.442)"></div>
<div class="fc" style="left:1097.5px;top:298.65px;width:41.2px;">10,40</div>
<div style="left:1097.5px;top:313px;width:41.2px;height:12px;background:rgba(40,215,40,0.302)"></div>
<div class="fc" style="left:1097.5px;top:312.15px;width:41.2px;">6,50</div>
<div style="left:1097.5px;top:326px;width:41.2px;height:13px;background:rgba(40,215,40,0.388)"></div>
<div class="fc" style="left:1097.5px;top:325.65px;width:41.2px;">8,90</div>
<div style="left:1097.5px;top:340px;width:41.2px;height:13px;background:rgba(255,0,0,0.094)"></div>
<div class="fc" style="left:1097.5px;top:339.65px;width:41.2px;">-2,30</div>
<div style="left:1097.5px;top:354px;width:41.2px;height:12px;background:rgba(255,0,0,0.092)"></div>
<div class="fc" style="left:1097.5px;top:353.15px;width:41.2px;">-2,20</div>
<div style="left:1097.5px;top:367px;width:41.2px;height:13px;background:rgba(40,215,40,0.149)"></div>
<div class="fc" style="left:1097.5px;top:366.65px;width:41.2px;">2,20</div>
<div style="left:1097.5px;top:381px;width:41.2px;height:13px;background:rgba(255,0,0,0.071)"></div>
<div class="fc" style="left:1097.5px;top:380.65px;width:41.2px;">-1,10</div>
<div style="left:1097.5px;top:395px;width:41.2px;height:12px;background:rgba(40,215,40,0.156)"></div>
<div class="fc" style="left:1097.5px;top:394.15px;width:41.2px;">2,40</div>
<div style="left:1097.5px;top:408px;width:41.2px;height:13px;background:rgba(40,215,40,0.320)"></div>
<div class="fc" style="left:1097.5px;top:407.65px;width:41.2px;">7,00</div>
<div style="left:1097.5px;top:422px;width:41.2px;height:13px;background:rgba(255,0,0,0.363)"></div>
<div class="fc" style="left:1097.5px;top:421.65px;width:41.2px;">-16,50</div>
<div style="left:1097.5px;top:436px;width:41.2px;height:13px;background:rgba(40,215,40,0.363)"></div>
<div class="fc" style="left:1097.5px;top:435.65px;width:41.2px;">8,20</div>
<div style="left:1097.5px;top:450px;width:41.2px;height:12px;background:rgba(40,215,40,0.388)"></div>
<div class="fc" style="left:1097.5px;top:449.15px;width:41.2px;">8,90</div>
<div style="left:1097.2px;top:462px;width:41.7px;height:15px;background:rgb(44,210,44);border:2px solid #000"></div>
<div class="fc" style="left:1097.5px;top:462.65px;width:41.2px;">27,40</div>
<div style="left:1097.5px;top:477px;width:41.2px;height:13px;background:transparent"></div>
<div class="fc" style="left:1097.5px;top:476.65px;width:41.2px;">0,00</div>
<div style="left:1097.5px;top:491px;width:41.2px;height:12px;background:rgba(40,215,40,0.099)"></div>
<div class="fc" style="left:1097.5px;top:490.15px;width:41.2px;">0,80</div>
<div style="left:1145.5px;top:107px;width:41.2px;height:13px;background:rgba(40,215,40,0.328)"></div>
<div class="fc" style="left:1145.5px;top:106.65px;width:41.2px;">7,20</div>
<div style="left:1145.5px;top:121px;width:41.2px;height:12px;background:rgba(40,215,40,0.213)"></div>
<div class="fc" style="left:1145.5px;top:120.15px;width:41.2px;">4,00</div>
<div style="left:1145.2px;top:133px;width:41.7px;height:15px;background:rgba(40,215,40,0.760);border:2px solid #000"></div>
<div class="fc" style="left:1145.5px;top:133.65px;width:41.2px;">19,30</div>
<div style="left:1145.5px;top:148px;width:41.2px;height:13px;background:rgba(40,215,40,0.696)"></div>
<div class="fc" style="left:1145.5px;top:147.65px;width:41.2px;">17,50</div>
<div style="left:1145.5px;top:162px;width:41.2px;height:12px;background:rgba(40,215,40,0.142)"></div>
<div class="fc" style="left:1145.5px;top:161.15px;width:41.2px;">2,00</div>
<div style="left:1145.5px;top:175px;width:41.2px;height:13px;background:rgba(255,0,0,0.280)"></div>
<div class="fc" style="left:1145.5px;top:174.65px;width:41.2px;">-12,10</div>
<div style="left:1145.5px;top:189px;width:41.2px;height:13px;background:rgba(255,0,0,0.234)"></div>
<div class="fc" style="left:1145.5px;top:188.65px;width:41.2px;">-9,70</div>
<div style="left:1145.5px;top:203px;width:41.2px;height:13px;background:rgba(255,0,0,0.166)"></div>
<div class="fc" style="left:1145.5px;top:202.65px;width:41.2px;">-6,10</div>
<div style="left:1145.5px;top:217px;width:41.2px;height:12px;background:rgba(40,215,40,0.106)"></div>
<div class="fc" style="left:1145.5px;top:216.15px;width:41.2px;">1,00</div>
<div style="left:1145.5px;top:230px;width:41.2px;height:13px;background:rgba(40,215,40,0.113)"></div>
<div class="fc" style="left:1145.5px;top:229.65px;width:41.2px;">1,20</div>
<div style="left:1145.5px;top:244px;width:41.2px;height:13px;background:rgba(40,215,40,0.142)"></div>
<div class="fc" style="left:1145.5px;top:243.65px;width:41.2px;">2,00</div>
<div style="left:1145.5px;top:258px;width:41.2px;height:12px;background:rgba(40,215,40,0.345)"></div>
<div class="fc" style="left:1145.5px;top:257.15px;width:41.2px;">7,70</div>
<div style="left:1145.5px;top:271px;width:41.2px;height:13px;background:rgba(255,0,0,0.223)"></div>
<div class="fc" style="left:1145.5px;top:270.65px;width:41.2px;">-9,10</div>
<div style="left:1145.5px;top:285px;width:41.2px;height:13px;background:rgba(40,215,40,0.263)"></div>
<div class="fc" style="left:1145.5px;top:284.65px;width:41.2px;">5,40</div>
<div style="left:1145.5px;top:299px;width:41.2px;height:13px;background:rgba(40,215,40,0.671)"></div>
<div class="fc" style="left:1145.5px;top:298.65px;width:41.2px;">16,80</div>
<div style="left:1145.5px;top:313px;width:41.2px;height:12px;background:rgba(40,215,40,0.213)"></div>
<div class="fc" style="left:1145.5px;top:312.15px;width:41.2px;">4,00</div>
<div style="left:1145.5px;top:326px;width:41.2px;height:13px;background:rgba(255,0,0,0.060)"></div>
<div class="fc" style="left:1145.5px;top:325.65px;width:41.2px;">-0,50</div>
<div style="left:1139.1px;top:162px;width:5.8px;height:164px;background:#008000"></div>
<div style="left:1193.5px;top:148px;width:41.2px;height:13px;background:rgba(40,215,40,0.106)"></div>
<div class="fc" style="left:1193.5px;top:147.65px;width:41.2px;">1,00</div>
<div style="left:1193.5px;top:162px;width:41.2px;height:12px;background:rgba(255,0,0,0.126)"></div>
<div class="fc" style="left:1193.5px;top:161.15px;width:41.2px;">-4,00</div>
<div style="left:1193.5px;top:175px;width:41.2px;height:13px;background:rgba(40,215,40,0.084)"></div>
<div class="fc" style="left:1193.5px;top:174.65px;width:41.2px;">0,40</div>
<div style="left:1193.5px;top:189px;width:41.2px;height:13px;background:rgba(40,215,40,0.145)"></div>
<div class="fc" style="left:1193.5px;top:188.65px;width:41.2px;">2,10</div>
<div style="left:1193.5px;top:203px;width:41.2px;height:13px;background:rgba(255,0,0,0.476)"></div>
<div class="fc" style="left:1193.5px;top:202.65px;width:41.2px;">-22,40</div>
<div style="left:1193.5px;top:217px;width:41.2px;height:12px;background:rgba(255,0,0,0.094)"></div>
<div class="fc" style="left:1193.5px;top:216.15px;width:41.2px;">-2,30</div>
<div style="left:1193.2px;top:229px;width:41.7px;height:15px;background:rgba(255,0,0,0.599);border:2px solid #000"></div>
<div class="fc" style="left:1193.5px;top:229.65px;width:41.2px;">-28,90</div>
<div style="left:1193.5px;top:244px;width:41.2px;height:13px;background:rgba(40,215,40,0.310)"></div>
<div class="fc" style="left:1193.5px;top:243.65px;width:41.2px;">6,70</div>
<div style="left:1193.5px;top:258px;width:41.2px;height:12px;background:rgba(255,0,0,0.079)"></div>
<div class="fc" style="left:1193.5px;top:257.15px;width:41.2px;">-1,50</div>
<div style="left:1193.5px;top:271px;width:41.2px;height:13px;background:rgba(255,0,0,0.056)"></div>
<div class="fc" style="left:1193.5px;top:270.65px;width:41.2px;">-0,30</div>
<div style="left:1193.5px;top:285px;width:41.2px;height:13px;background:rgba(255,0,0,0.118)"></div>
<div class="fc" style="left:1193.5px;top:284.65px;width:41.2px;">-3,60</div>
<div style="left:1187.1px;top:162px;width:5.8px;height:82px;background:#ff0000"></div>
<div style="left:1241.2px;top:216px;width:41.7px;height:14px;background:rgba(40,215,40,0.410);border:2px solid #000"></div>
<div class="fc" style="left:1241.5px;top:216.15px;width:41.2px;">9,50</div>
<div style="left:1241.5px;top:230px;width:41.2px;height:13px;background:rgba(40,215,40,0.345)"></div>
<div class="fc" style="left:1241.5px;top:229.65px;width:41.2px;">7,70</div>
<div style="left:1241.2px;top:243px;width:41.7px;height:15px;background:rgba(255,0,0,0.230);border:2px solid #000"></div>
<div class="fc" style="left:1241.5px;top:243.65px;width:41.2px;">-9,50</div>
<div style="left:1241.5px;top:258px;width:41.2px;height:12px;background:rgba(40,215,40,0.199)"></div>
<div class="fc" style="left:1241.5px;top:257.15px;width:41.2px;">3,60</div>
<div style="left:1241.5px;top:271px;width:41.2px;height:13px;background:rgba(255,0,0,0.179)"></div>
<div class="fc" style="left:1241.5px;top:270.65px;width:41.2px;">-6,80</div>
<div style="left:1241.5px;top:285px;width:41.2px;height:13px;background:rgba(40,215,40,0.285)"></div>
<div class="fc" style="left:1241.5px;top:284.65px;width:41.2px;">6,00</div>
<div style="left:1241.5px;top:299px;width:41.2px;height:13px;background:rgba(255,0,0,0.088)"></div>
<div class="fc" style="left:1241.5px;top:298.65px;width:41.2px;">-2,00</div>
<div style="left:1241.5px;top:313px;width:41.2px;height:12px;background:rgba(255,0,0,0.065)"></div>
<div class="fc" style="left:1241.5px;top:312.15px;width:41.2px;">-0,80</div>
<div style="left:1241.5px;top:326px;width:41.2px;height:13px;background:rgba(255,0,0,0.080)"></div>
<div class="fc" style="left:1241.5px;top:325.65px;width:41.2px;">-1,60</div>
<div style="left:1241.5px;top:340px;width:41.2px;height:13px;background:rgba(255,0,0,0.065)"></div>
<div class="fc" style="left:1241.5px;top:339.65px;width:41.2px;">-0,80</div>
<div style="left:1235.1px;top:230px;width:5.8px;height:110px;background:#ff0000"></div>
<div style="left:1289.5px;top:313px;width:41.2px;height:12px;background:rgba(40,215,40,0.270)"></div>
<div class="fc" style="left:1289.5px;top:312.15px;width:41.2px;">5,60</div>
<div style="left:1289.5px;top:326px;width:41.2px;height:13px;background:rgba(40,215,40,0.320)"></div>
<div class="fc" style="left:1289.5px;top:325.65px;width:41.2px;">7,00</div>
<div style="left:1289.2px;top:339px;width:41.7px;height:15px;background:rgba(255,0,0,0.392);border:2px solid #000"></div>
<div class="fc" style="left:1289.5px;top:339.65px;width:41.2px;">-18,00</div>
<div style="left:1289.5px;top:354px;width:41.2px;height:12px;background:rgba(40,215,40,0.231)"></div>
<div class="fc" style="left:1289.5px;top:353.15px;width:41.2px;">4,50</div>
<div style="left:1289.5px;top:367px;width:41.2px;height:13px;background:rgba(40,215,40,0.109)"></div>
<div class="fc" style="left:1289.5px;top:366.65px;width:41.2px;">1,10</div>
<div style="left:1289.5px;top:381px;width:41.2px;height:13px;background:rgba(255,0,0,0.134)"></div>
<div class="fc" style="left:1289.5px;top:380.65px;width:41.2px;">-4,40</div>
<div style="left:1283.1px;top:326px;width:5.8px;height:41px;background:#ff0000"></div>
<div style="left:1337.5px;top:258px;width:41.2px;height:12px;background:rgba(40,215,40,0.256)"></div>
<div class="fc" style="left:1337.5px;top:257.15px;width:41.2px;">5,20</div>
<div style="left:1337.5px;top:271px;width:41.2px;height:13px;background:rgba(40,215,40,0.657)"></div>
<div class="fc" style="left:1337.5px;top:270.65px;width:41.2px;">16,40</div>
<div style="left:1337.2px;top:284px;width:41.7px;height:15px;background:rgba(255,0,0,0.633);border:2px solid #000"></div>
<div class="fc" style="left:1337.5px;top:284.65px;width:41.2px;">-30,70</div>
<div style="left:1337.5px;top:299px;width:41.2px;height:13px;background:rgba(40,215,40,0.771)"></div>
<div class="fc" style="left:1337.5px;top:298.65px;width:41.2px;">19,60</div>
<div style="left:1337.5px;top:313px;width:41.2px;height:12px;background:rgb(44,210,44)"></div>
<div class="fc" style="left:1337.5px;top:312.15px;width:41.2px;">27,40</div>
<div style="left:1337.5px;top:326px;width:41.2px;height:13px;background:rgba(40,215,40,0.235)"></div>
<div class="fc" style="left:1337.5px;top:325.65px;width:41.2px;">4,60</div>
<div style="left:1337.5px;top:340px;width:41.2px;height:13px;background:rgba(40,215,40,0.421)"></div>
<div class="fc" style="left:1337.5px;top:339.65px;width:41.2px;">9,80</div>
<div style="left:1337.5px;top:354px;width:41.2px;height:12px;background:rgba(40,215,40,0.084)"></div>
<div class="fc" style="left:1337.5px;top:353.15px;width:41.2px;">0,40</div>
<div style="left:1337.5px;top:367px;width:41.2px;height:13px;background:rgba(255,0,0,0.052)"></div>
<div class="fc" style="left:1337.5px;top:366.65px;width:41.2px;">-0,10</div>
<div style="left:1331.1px;top:258px;width:5.8px;height:109px;background:#008000"></div>
<div style="left:1385.5px;top:230px;width:41.2px;height:13px;background:rgba(40,215,40,0.159)"></div>
<div class="fc" style="left:1385.5px;top:229.65px;width:41.2px;">2,50</div>
<div style="left:1385.5px;top:244px;width:41.2px;height:13px;background:rgba(40,215,40,0.328)"></div>
<div class="fc" style="left:1385.5px;top:243.65px;width:41.2px;">7,20</div>
<div style="left:1385.5px;top:258px;width:41.2px;height:12px;background:rgba(255,0,0,0.177)"></div>
<div class="fc" style="left:1385.5px;top:257.15px;width:41.2px;">-6,70</div>
<div style="left:1385.5px;top:271px;width:41.2px;height:13px;background:rgba(40,215,40,0.238)"></div>
<div class="fc" style="left:1385.5px;top:270.65px;width:41.2px;">4,70</div>
<div style="left:1385.2px;top:284px;width:41.7px;height:15px;background:rgb(32,187,32);border:2px solid #000"></div>
<div class="fc" style="left:1385.5px;top:284.65px;width:41.2px;">44,40</div>
<div style="left:1385.5px;top:299px;width:41.2px;height:13px;background:rgba(255,0,0,0.401)"></div>
<div class="fc" style="left:1385.5px;top:298.65px;width:41.2px;">-18,50</div>
<div style="left:1385.5px;top:313px;width:41.2px;height:12px;background:rgba(255,0,0,0.189)"></div>
<div class="fc" style="left:1385.5px;top:312.15px;width:41.2px;">-7,30</div>
<div style="left:1379.1px;top:258px;width:5.8px;height:13px;background:#d0d0d0"></div>
<div style="left:1433.5px;top:217px;width:41.2px;height:12px;background:rgba(40,215,40,0.453)"></div>
<div class="fc" style="left:1433.5px;top:216.15px;width:41.2px;">10,70</div>
<div style="left:1433.5px;top:230px;width:41.2px;height:13px;background:rgba(40,215,40,0.392)"></div>
<div class="fc" style="left:1433.5px;top:229.65px;width:41.2px;">9,00</div>
<div style="left:1433.2px;top:243px;width:41.7px;height:15px;background:rgba(40,215,40,0.996);border:2px solid #000"></div>
<div class="fc" style="left:1433.5px;top:243.65px;width:41.2px;">25,90</div>
<div style="left:1433.5px;top:258px;width:41.2px;height:12px;background:rgba(40,215,40,0.474)"></div>
<div class="fc" style="left:1433.5px;top:257.15px;width:41.2px;">11,30</div>
<div style="left:1433.5px;top:271px;width:41.2px;height:13px;background:rgba(255,0,0,0.257)"></div>
<div class="fc" style="left:1433.5px;top:270.65px;width:41.2px;">-10,90</div>
<div style="left:1433.5px;top:285px;width:41.2px;height:13px;background:rgba(40,215,40,0.120)"></div>
<div class="fc" style="left:1433.5px;top:284.65px;width:41.2px;">1,40</div>
<div style="left:1433.5px;top:299px;width:41.2px;height:13px;background:rgba(255,0,0,0.075)"></div>
<div class="fc" style="left:1433.5px;top:298.65px;width:41.2px;">-1,30</div>
<div style="left:1433.5px;top:313px;width:41.2px;height:12px;background:rgba(255,0,0,0.088)"></div>
<div class="fc" style="left:1433.5px;top:312.15px;width:41.2px;">-2,00</div>
<div style="left:1427.1px;top:244px;width:5.8px;height:27px;background:#008000"></div>
<div style="left:266px;top:695px;width:8.5px;height:15px;overflow:hidden"><div style="left:-20px;top:0;width:28.5px;height:15px;background:rgba(40,215,40,.3);border:2px solid #000"></div></div>
<div class="fc" style="left:265.5px;top:695.65px;width:8.7px;padding-right:1px;overflow:hidden">0</div>
<div style="left:266px;top:710px;width:8px;height:13px;background:rgba(255,0,0,.06)"></div>
<div class="fc" style="left:265.5px;top:709.65px;width:8.7px;padding-right:1px;overflow:hidden">0</div>
<div style="left:266px;top:724px;width:8px;height:12px;background:rgba(255,0,0,.08)"></div>
<div class="fc" style="left:265.5px;top:723.15px;width:8.7px;padding-right:1px;overflow:hidden">0</div>
<div style="left:266px;top:737px;width:8px;height:13px;background:rgba(255,0,0,.05)"></div>
<div class="fc" style="left:265.5px;top:736.65px;width:8.7px;padding-right:1px;overflow:hidden">0</div>
<div style="left:10px;top:889.0px;width:1572px;height:140.0px;background:#e4e4e4"></div>
<div class="tc" style="left:274px;top:889.5px;width:48px;background:#000000;color:#fff;text-align:center;padding:0">b</div>
<div class="tc" style="left:322px;top:889.5px;width:48px;background:#000000;color:#fff;text-align:center;padding:0">b</div>
<div class="tc" style="left:370px;top:889.5px;width:48px;background:#008b8b;color:#fff;text-align:center;padding:0">c</div>
<div class="tc" style="left:418px;top:889.5px;width:48px;background:#008b8b;color:#fff;text-align:center;padding:0">c</div>
<div class="tc" style="left:466px;top:889.5px;width:48px;background:#008b8b;color:#fff;text-align:center;padding:0">c</div>
<div class="tc" style="left:514px;top:889.5px;width:48px;background:#8b0000;color:#fff;text-align:center;padding:0">d</div>
<div class="tc" style="left:562px;top:889.5px;width:48px;background:#8b0000;color:#fff;text-align:center;padding:0">d</div>
<div class="tc" style="left:610px;top:889.5px;width:48px;background:#8b0000;color:#fff;text-align:center;padding:0">d</div>
<div class="tc" style="left:658px;top:889.5px;width:48px;background:#00008b;color:#fff;text-align:center;padding:0">e</div>
<div class="tc" style="left:706px;top:889.5px;width:48px;background:#00008b;color:#fff;text-align:center;padding:0">e</div>
<div class="tc" style="left:754px;top:889.5px;width:48px;background:#00008b;color:#fff;text-align:center;padding:0">e</div>
<div class="tc" style="left:802px;top:889.5px;width:48px;background:#f07c00;color:#fff;text-align:center;padding:0">f</div>
<div class="tc" style="left:850px;top:889.5px;width:48px;background:#f07c00;color:#fff;text-align:center;padding:0">f</div>
<div class="tc" style="left:898px;top:889.5px;width:48px;background:#f07c00;color:#fff;text-align:center;padding:0">f</div>
<div class="tc" style="left:946px;top:889.5px;width:48px;background:#8b008b;color:#fff;text-align:center;padding:0">g</div>
<div class="tc" style="left:994px;top:889.5px;width:48px;background:#8b008b;color:#fff;text-align:center;padding:0">g</div>
<div class="tc" style="left:1042px;top:889.5px;width:48px;background:#8b008b;color:#fff;text-align:center;padding:0">g</div>
<div class="tc" style="left:1090px;top:889.5px;width:48px;background:#b8860b;color:#fff;text-align:center;padding:0">h</div>
<div class="tc" style="left:1138px;top:889.5px;width:48px;background:#b8860b;color:#fff;text-align:center;padding:0">h</div>
<div class="tc" style="left:1186px;top:889.5px;width:48px;background:#b8860b;color:#fff;text-align:center;padding:0">h</div>
<div class="tc" style="left:1234px;top:889.5px;width:48px;background:#696969;color:#fff;text-align:center;padding:0">i</div>
<div class="tc" style="left:1282px;top:889.5px;width:48px;background:#696969;color:#fff;text-align:center;padding:0">i</div>
<div class="tc" style="left:1330px;top:889.5px;width:48px;background:#696969;color:#fff;text-align:center;padding:0">i</div>
<div class="tc" style="left:1378px;top:889.5px;width:48px;background:#ff0000;color:#fff;text-align:center;padding:0">j</div>
<div class="tc" style="left:1426px;top:889.5px;width:48px;background:#ff0000;color:#fff;text-align:center;padding:0">j</div>
<div style="left:265px;top:889.5px;width:9px;height:14px;background:#000"></div>
<div class="tl" style="left:13px;top:889.6px">Session Letter</div>
<div class="tl" style="left:13px;top:903.6px">Ask</div>
<div class="tl" style="left:13px;top:917.6px">Bid</div>
<div class="tl" style="left:13px;top:931.6px">Delta</div>
<div class="tl" style="left:13px;top:945.6px">Max Delta</div>
<div class="tl" style="left:13px;top:959.6px">Min Delta</div>
<div class="tl" style="left:13px;top:973.6px">Cum. Delta</div>
<div class="tl" style="left:13px;top:987.6px">Cum. Delta/Volume</div>
<div class="tl" style="left:13px;top:1001.6px">Volume</div>
<div class="tl" style="left:13px;top:1015.6px">Cum. Volume</div>
<div class="tc" style="left:274px;top:903.5px;width:48px;background:#aaf0aa">67,20</div>
<div class="tc" style="left:322px;top:903.5px;width:48px;background:#c3f5c3">36,10</div>
<div class="tc" style="left:370px;top:903.5px;width:48px;background:#ffd2d2">14,20</div>
<div class="tc" style="left:418px;top:903.5px;width:48px;background:#ffdfdf">31,80</div>
<div class="tc" style="left:466px;top:903.5px;width:48px;background:#ffd1d1">30,80</div>
<div class="tc" style="left:514px;top:903.5px;width:48px;background:#a3efa3">42,90</div>
<div class="tc" style="left:562px;top:903.5px;width:48px;background:#cdf6cd">34,50</div>
<div class="tc" style="left:610px;top:903.5px;width:48px;background:#4ae04a">62,70</div>
<div class="tc" style="left:658px;top:903.5px;width:48px;background:#ffe6e6">32,00</div>
<div class="tc" style="left:706px;top:903.5px;width:48px;background:#c7f5c7">37,80</div>
<div class="tc" style="left:754px;top:903.5px;width:48px;background:#ffc4c4">43,00</div>
<div class="tc" style="left:802px;top:903.5px;width:48px;background:#ffd3d3">54,10</div>
<div class="tc" style="left:850px;top:903.5px;width:48px;background:#51e151">78,80</div>
<div class="tc" style="left:898px;top:903.5px;width:48px;background:#bdf4bd">74,30</div>
<div class="tc" style="left:946px;top:903.5px;width:48px;background:#8eec8e">188,40</div>
<div class="tc" style="left:994px;top:903.5px;width:48px;background:#ffefef">73,40</div>
<div class="tc" style="left:1042px;top:903.5px;width:48px;background:#ffeaea">42,10</div>
<div class="tc" style="left:1090px;top:903.5px;width:48px;background:#1fae1f">156,00</div>
<div class="tc" style="left:1138px;top:903.5px;width:48px;background:#37dd37">225,90</div>
<div class="tc" style="left:1186px;top:903.5px;width:48px;background:#ff7575">50,80</div>
<div class="tc" style="left:1234px;top:903.5px;width:48px;background:#dffadf">72,20</div>
<div class="tc" style="left:1282px;top:903.5px;width:48px;background:#ffebeb">67,00</div>
<div class="tc" style="left:1330px;top:903.5px;width:48px;background:#30d930">99,50</div>
<div class="tc" style="left:1378px;top:903.5px;width:48px;background:#91ec91">116,00</div>
<div class="tc" style="left:1426px;top:903.5px;width:48px;background:#4fe14f">93,30</div>
<div class="tc" style="left:266px;top:903.5px;width:8px;padding-right:1px;background:#fff;overflow:hidden;direction:rtl">0</div>
<div class="tc" style="left:274px;top:917.5px;width:48px;background:#aaf0aa">47,60</div>
<div class="tc" style="left:322px;top:917.5px;width:48px;background:#c3f5c3">23,30</div>
<div class="tc" style="left:370px;top:917.5px;width:48px;background:#ffd2d2">28,70</div>
<div class="tc" style="left:418px;top:917.5px;width:48px;background:#ffdfdf">40,60</div>
<div class="tc" style="left:466px;top:917.5px;width:48px;background:#ffd1d1">45,70</div>
<div class="tc" style="left:514px;top:917.5px;width:48px;background:#a3efa3">21,30</div>
<div class="tc" style="left:562px;top:917.5px;width:48px;background:#cdf6cd">24,30</div>
<div class="tc" style="left:610px;top:917.5px;width:48px;background:#4ae04a">17,20</div>
<div class="tc" style="left:658px;top:917.5px;width:48px;background:#ffe6e6">38,20</div>
<div class="tc" style="left:706px;top:917.5px;width:48px;background:#c7f5c7">26,10</div>
<div class="tc" style="left:754px;top:917.5px;width:48px;background:#ffc4c4">62,90</div>
<div class="tc" style="left:802px;top:917.5px;width:48px;background:#ffd3d3">68,10</div>
<div class="tc" style="left:850px;top:917.5px;width:48px;background:#51e151">35,30</div>
<div class="tc" style="left:898px;top:917.5px;width:48px;background:#bdf4bd">59,80</div>
<div class="tc" style="left:946px;top:917.5px;width:48px;background:#8eec8e">161,10</div>
<div class="tc" style="left:994px;top:917.5px;width:48px;background:#ffefef">75,70</div>
<div class="tc" style="left:1042px;top:917.5px;width:48px;background:#ffeaea">46,70</div>
<div class="tc" style="left:1090px;top:917.5px;width:48px;background:#1fae1f">93,90</div>
<div class="tc" style="left:1138px;top:917.5px;width:48px;background:#37dd37">175,30</div>
<div class="tc" style="left:1186px;top:917.5px;width:48px;background:#ff7575">103,60</div>
<div class="tc" style="left:1234px;top:917.5px;width:48px;background:#dffadf">66,90</div>
<div class="tc" style="left:1282px;top:917.5px;width:48px;background:#ffebeb">71,20</div>
<div class="tc" style="left:1330px;top:917.5px;width:48px;background:#30d930">46,90</div>
<div class="tc" style="left:1378px;top:917.5px;width:48px;background:#91ec91">89,70</div>
<div class="tc" style="left:1426px;top:917.5px;width:48px;background:#4fe14f">49,20</div>
<div class="tc" style="left:266px;top:917.5px;width:8px;padding-right:1px;background:#fff;overflow:hidden;direction:rtl">0</div>
<div class="tc" style="left:274px;top:931.5px;width:48px;background:#aaf0aa">19,60</div>
<div class="tc" style="left:322px;top:931.5px;width:48px;background:#c3f5c3">12,80</div>
<div class="tc" style="left:370px;top:931.5px;width:48px;background:#ffd2d2">-14,50</div>
<div class="tc" style="left:418px;top:931.5px;width:48px;background:#ffdfdf">-8,80</div>
<div class="tc" style="left:466px;top:931.5px;width:48px;background:#ffd1d1">-14,90</div>
<div class="tc" style="left:514px;top:931.5px;width:48px;background:#a3efa3">21,60</div>
<div class="tc" style="left:562px;top:931.5px;width:48px;background:#cdf6cd">10,20</div>
<div class="tc" style="left:610px;top:931.5px;width:48px;background:#4ae04a">45,50</div>
<div class="tc" style="left:658px;top:931.5px;width:48px;background:#ffe6e6">-6,20</div>
<div class="tc" style="left:706px;top:931.5px;width:48px;background:#c7f5c7">11,70</div>
<div class="tc" style="left:754px;top:931.5px;width:48px;background:#ffc4c4">-19,90</div>
<div class="tc" style="left:802px;top:931.5px;width:48px;background:#ffd3d3">-14,00</div>
<div class="tc" style="left:850px;top:931.5px;width:48px;background:#51e151">43,50</div>
<div class="tc" style="left:898px;top:931.5px;width:48px;background:#bdf4bd">14,50</div>
<div class="tc" style="left:946px;top:931.5px;width:48px;background:#8eec8e">27,30</div>
<div class="tc" style="left:994px;top:931.5px;width:48px;background:#ffefef">-2,30</div>
<div class="tc" style="left:1042px;top:931.5px;width:48px;background:#ffeaea">-4,60</div>
<div class="tc" style="left:1090px;top:931.5px;width:48px;background:#1fae1f">62,10</div>
<div class="tc" style="left:1138px;top:931.5px;width:48px;background:#37dd37">50,60</div>
<div class="tc" style="left:1186px;top:931.5px;width:48px;background:#ff7575">-52,80</div>
<div class="tc" style="left:1234px;top:931.5px;width:48px;background:#dffadf">5,30</div>
<div class="tc" style="left:1282px;top:931.5px;width:48px;background:#ffebeb">-4,20</div>
<div class="tc" style="left:1330px;top:931.5px;width:48px;background:#30d930">52,60</div>
<div class="tc" style="left:1378px;top:931.5px;width:48px;background:#91ec91">26,30</div>
<div class="tc" style="left:1426px;top:931.5px;width:48px;background:#4fe14f">44,10</div>
<div class="tc" style="left:266px;top:931.5px;width:8px;padding-right:1px;background:#fff;overflow:hidden;direction:rtl">0</div>
<div class="tc" style="left:274px;top:945.5px;width:48px;background:#7de97d">33,90</div>
<div class="tc" style="left:322px;top:945.5px;width:48px;background:#c0f4c0">12,80</div>
<div class="tc" style="left:370px;top:945.5px;width:48px;background:#e2fae2">4,60</div>
<div class="tc" style="left:418px;top:945.5px;width:48px;background:#d4f8d4">7,70</div>
<div class="tc" style="left:466px;top:945.5px;width:48px;background:#edfced">2,50</div>
<div class="tc" style="left:514px;top:945.5px;width:48px;background:#8ceb8c">28,70</div>
<div class="tc" style="left:562px;top:945.5px;width:48px;background:#a8f0a8">19,90</div>
<div class="tc" style="left:610px;top:945.5px;width:48px;background:#5ce35c">45,60</div>
<div class="tc" style="left:658px;top:945.5px;width:48px;background:#ebfceb">2,80</div>
<div class="tc" style="left:706px;top:945.5px;width:48px;background:#b5f2b5">15,90</div>
<div class="tc" style="left:754px;top:945.5px;width:48px;background:#cdf6cd">9,50</div>
<div class="tc" style="left:802px;top:945.5px;width:48px;background:#c4f5c4">11,90</div>
<div class="tc" style="left:850px;top:945.5px;width:48px;background:#5be35b">45,90</div>
<div class="tc" style="left:898px;top:945.5px;width:48px;background:#8aeb8a">29,30</div>
<div class="tc" style="left:946px;top:945.5px;width:48px;background:#90ec90">27,30</div>
<div class="tc" style="left:994px;top:945.5px;width:48px;background:#93ed93">26,30</div>
<div class="tc" style="left:1042px;top:945.5px;width:48px;background:#eafbea">3,00</div>
<div class="tc" style="left:1090px;top:945.5px;width:48px;background:#31db31">62,10</div>
<div class="tc" style="left:1138px;top:945.5px;width:48px;background:#42df42">55,60</div>
<div class="tc" style="left:1186px;top:945.5px;width:48px;background:#ffffff">0,00</div>
<div class="tc" style="left:1234px;top:945.5px;width:48px;background:#c5f5c5">11,60</div>
<div class="tc" style="left:1282px;top:945.5px;width:48px;background:#a4f0a4">20,90</div>
<div class="tc" style="left:1330px;top:945.5px;width:48px;background:#23b723">74,20</div>
<div class="tc" style="left:1378px;top:945.5px;width:48px;background:#83ea83">31,80</div>
<div class="tc" style="left:1426px;top:945.5px;width:48px;background:#60e460">44,10</div>
<div class="tc" style="left:266px;top:945.5px;width:8px;padding-right:1px;background:#fff;overflow:hidden;direction:rtl">0</div>
<div class="tc" style="left:274px;top:959.5px;width:48px;background:#ffffff">0,00</div>
<div class="tc" style="left:322px;top:959.5px;width:48px;background:#fff0f0">-3,20</div>
<div class="tc" style="left:370px;top:959.5px;width:48px;background:#ffd7d7">-14,80</div>
<div class="tc" style="left:418px;top:959.5px;width:48px;background:#ffd5d5">-15,80</div>
<div class="tc" style="left:466px;top:959.5px;width:48px;background:#ffd6d6">-15,50</div>
<div class="tc" style="left:514px;top:959.5px;width:48px;background:#fff6f6">-0,50</div>
<div class="tc" style="left:562px;top:959.5px;width:48px;background:#fff7f7">-0,20</div>
<div class="tc" style="left:610px;top:959.5px;width:48px;background:#ffffff">0,00</div>
<div class="tc" style="left:658px;top:959.5px;width:48px;background:#ffe5e5">-8,50</div>
<div class="tc" style="left:706px;top:959.5px;width:48px;background:#fff0f0">-3,60</div>
<div class="tc" style="left:754px;top:959.5px;width:48px;background:#ffc8c8">-21,70</div>
<div class="tc" style="left:802px;top:959.5px;width:48px;background:#ffd2d2">-17,20</div>
<div class="tc" style="left:850px;top:959.5px;width:48px;background:#ffffff">0,00</div>
<div class="tc" style="left:898px;top:959.5px;width:48px;background:#ffffff">0,00</div>
<div class="tc" style="left:946px;top:959.5px;width:48px;background:#ffe2e2">-9,80</div>
<div class="tc" style="left:994px;top:959.5px;width:48px;background:#ffdddd">-12,40</div>
<div class="tc" style="left:1042px;top:959.5px;width:48px;background:#ffc0c0">-25,60</div>
<div class="tc" style="left:1090px;top:959.5px;width:48px;background:#fff2f2">-2,30</div>
<div class="tc" style="left:1138px;top:959.5px;width:48px;background:#ffffff">0,00</div>
<div class="tc" style="left:1186px;top:959.5px;width:48px;background:#ff6363">-68,60</div>
<div class="tc" style="left:1234px;top:959.5px;width:48px;background:#ffdfdf">-11,20</div>
<div class="tc" style="left:1282px;top:959.5px;width:48px;background:#ffe5e5">-8,30</div>
<div class="tc" style="left:1330px;top:959.5px;width:48px;background:#fff5f5">-0,90</div>
<div class="tc" style="left:1378px;top:959.5px;width:48px;background:#ffd0d0">-18,40</div>
<div class="tc" style="left:1426px;top:959.5px;width:48px;background:#fff5f5">-1,10</div>
<div class="tc" style="left:266px;top:959.5px;width:8px;padding-right:1px;background:#fff;overflow:hidden;direction:rtl">0</div>
<div class="tc" style="left:274px;top:973.5px;width:48px;background:#d9f9d9">174,60</div>
<div class="tc" style="left:322px;top:973.5px;width:48px;background:#d7f8d7">187,40</div>
<div class="tc" style="left:370px;top:973.5px;width:48px;background:#daf9da">172,90</div>
<div class="tc" style="left:418px;top:973.5px;width:48px;background:#dcf9dc">164,10</div>
<div class="tc" style="left:466px;top:973.5px;width:48px;background:#dffadf">149,20</div>
<div class="tc" style="left:514px;top:973.5px;width:48px;background:#daf9da">170,80</div>
<div class="tc" style="left:562px;top:973.5px;width:48px;background:#d8f8d8">181,00</div>
<div class="tc" style="left:610px;top:973.5px;width:48px;background:#cef7ce">226,50</div>
<div class="tc" style="left:658px;top:973.5px;width:48px;background:#cff7cf">220,30</div>
<div class="tc" style="left:706px;top:973.5px;width:48px;background:#cdf6cd">232,00</div>
<div class="tc" style="left:754px;top:973.5px;width:48px;background:#d1f7d1">212,10</div>
<div class="tc" style="left:802px;top:973.5px;width:48px;background:#d4f8d4">198,10</div>
<div class="tc" style="left:850px;top:973.5px;width:48px;background:#cbf6cb">241,60</div>
<div class="tc" style="left:898px;top:973.5px;width:48px;background:#c8f6c8">256,10</div>
<div class="tc" style="left:946px;top:973.5px;width:48px;background:#c2f5c2">283,40</div>
<div class="tc" style="left:994px;top:973.5px;width:48px;background:#c2f5c2">281,10</div>
<div class="tc" style="left:1042px;top:973.5px;width:48px;background:#c3f5c3">276,50</div>
<div class="tc" style="left:1090px;top:973.5px;width:48px;background:#b6f3b6">338,60</div>
<div class="tc" style="left:1138px;top:973.5px;width:48px;background:#abf1ab">389,20</div>
<div class="tc" style="left:1186px;top:973.5px;width:48px;background:#b6f3b6">336,40</div>
<div class="tc" style="left:1234px;top:973.5px;width:48px;background:#b5f2b5">341,70</div>
<div class="tc" style="left:1282px;top:973.5px;width:48px;background:#b6f3b6">337,50</div>
<div class="tc" style="left:1330px;top:973.5px;width:48px;background:#abf1ab">390,10</div>
<div class="tc" style="left:1378px;top:973.5px;width:48px;background:#a5f0a5">416,40</div>
<div class="tc" style="left:1426px;top:973.5px;width:48px;background:#9cee9c">460,50</div>
<div class="tc" style="left:266px;top:973.5px;width:8px;padding-right:1px;background:#e0fae0;overflow:hidden;direction:rtl">0</div>
<div class="tc" style="left:274px;top:987.5px;width:48px;background:#e4fae4">3,6%</div>
<div class="tc" style="left:322px;top:987.5px;width:48px;background:#e4fae4">3,8%</div>
<div class="tc" style="left:370px;top:987.5px;width:48px;background:#e4fae4">3,5%</div>
<div class="tc" style="left:418px;top:987.5px;width:48px;background:#e4fae4">3,2%</div>
<div class="tc" style="left:466px;top:987.5px;width:48px;background:#e4fae4">2,9%</div>
<div class="tc" style="left:514px;top:987.5px;width:48px;background:#e4fae4">3,3%</div>
<div class="tc" style="left:562px;top:987.5px;width:48px;background:#e4fae4">3,4%</div>
<div class="tc" style="left:610px;top:987.5px;width:48px;background:#e4fae4">4,2%</div>
<div class="tc" style="left:658px;top:987.5px;width:48px;background:#e4fae4">4,1%</div>
<div class="tc" style="left:706px;top:987.5px;width:48px;background:#e4fae4">4,2%</div>
<div class="tc" style="left:754px;top:987.5px;width:48px;background:#e4fae4">3,8%</div>
<div class="tc" style="left:802px;top:987.5px;width:48px;background:#e4fae4">3,5%</div>
<div class="tc" style="left:850px;top:987.5px;width:48px;background:#e4fae4">4,1%</div>
<div class="tc" style="left:898px;top:987.5px;width:48px;background:#e4fae4">4,3%</div>
<div class="tc" style="left:946px;top:987.5px;width:48px;background:#e4fae4">4,5%</div>
<div class="tc" style="left:994px;top:987.5px;width:48px;background:#e4fae4">4,3%</div>
<div class="tc" style="left:1042px;top:987.5px;width:48px;background:#e4fae4">4,2%</div>
<div class="tc" style="left:1090px;top:987.5px;width:48px;background:#e4fae4">5,0%</div>
<div class="tc" style="left:1138px;top:987.5px;width:48px;background:#e4fae4">5,4%</div>
<div class="tc" style="left:1186px;top:987.5px;width:48px;background:#e4fae4">4,6%</div>
<div class="tc" style="left:1234px;top:987.5px;width:48px;background:#e4fae4">4,5%</div>
<div class="tc" style="left:1282px;top:987.5px;width:48px;background:#e4fae4">4,4%</div>
<div class="tc" style="left:1330px;top:987.5px;width:48px;background:#e4fae4">5,0%</div>
<div class="tc" style="left:1378px;top:987.5px;width:48px;background:#e4fae4">5,2%</div>
<div class="tc" style="left:1426px;top:987.5px;width:48px;background:#e4fae4">5,7%</div>
<div class="tc" style="left:266px;top:987.5px;width:8px;padding-right:1px;background:#e4fae4;overflow:hidden;direction:rtl">%</div>
<div class="tc" style="left:274px;top:1001.5px;width:48px;background:#cbcbff">114,80</div>
<div class="tc" style="left:322px;top:1001.5px;width:48px;background:#e2e2ff">59,40</div>
<div class="tc" style="left:370px;top:1001.5px;width:48px;background:#eaeaff">42,90</div>
<div class="tc" style="left:418px;top:1001.5px;width:48px;background:#ddddff">72,40</div>
<div class="tc" style="left:466px;top:1001.5px;width:48px;background:#dbdbff">76,50</div>
<div class="tc" style="left:514px;top:1001.5px;width:48px;background:#e0e0ff">64,20</div>
<div class="tc" style="left:562px;top:1001.5px;width:48px;background:#e3e3ff">58,80</div>
<div class="tc" style="left:610px;top:1001.5px;width:48px;background:#dadaff">79,90</div>
<div class="tc" style="left:658px;top:1001.5px;width:48px;background:#dedeff">70,20</div>
<div class="tc" style="left:706px;top:1001.5px;width:48px;background:#e0e0ff">63,90</div>
<div class="tc" style="left:754px;top:1001.5px;width:48px;background:#cfcfff">105,90</div>
<div class="tc" style="left:802px;top:1001.5px;width:48px;background:#c8c8ff">122,20</div>
<div class="tc" style="left:850px;top:1001.5px;width:48px;background:#cbcbff">114,10</div>
<div class="tc" style="left:898px;top:1001.5px;width:48px;background:#c3c3ff">134,10</div>
<div class="tc" style="left:946px;top:1001.5px;width:48px;background:#7272ff">349,50</div>
<div class="tc" style="left:994px;top:1001.5px;width:48px;background:#bdbdff">149,10</div>
<div class="tc" style="left:1042px;top:1001.5px;width:48px;background:#d6d6ff">88,80</div>
<div class="tc" style="left:1090px;top:1001.5px;width:48px;background:#9797ff">249,90</div>
<div class="tc" style="left:1138px;top:1001.5px;width:48px;background:#5f5fff">401,20</div>
<div class="tc" style="left:1186px;top:1001.5px;width:48px;background:#bbbbff">154,40</div>
<div class="tc" style="left:1234px;top:1001.5px;width:48px;background:#c1c1ff">139,10</div>
<div class="tc" style="left:1282px;top:1001.5px;width:48px;background:#c2c2ff">138,20</div>
<div class="tc" style="left:1330px;top:1001.5px;width:48px;background:#bfbfff">146,40</div>
<div class="tc" style="left:1378px;top:1001.5px;width:48px;background:#a7a7ff">205,70</div>
<div class="tc" style="left:1426px;top:1001.5px;width:48px;background:#c0c0ff">142,50</div>
<div class="tc" style="left:266px;top:1001.5px;width:8px;padding-right:1px;background:#ddddff;overflow:hidden;direction:rtl">0</div>
<div class="tc" style="left:274px;top:1015.5px;width:48px;background:#cfcfff">4835,4</div>
<div class="tc" style="left:322px;top:1015.5px;width:48px;background:#cfcfff">4894,8</div>
<div class="tc" style="left:370px;top:1015.5px;width:48px;background:#cfcfff">4937,7</div>
<div class="tc" style="left:418px;top:1015.5px;width:48px;background:#ceceff">5010,1</div>
<div class="tc" style="left:466px;top:1015.5px;width:48px;background:#ceceff">5086,6</div>
<div class="tc" style="left:514px;top:1015.5px;width:48px;background:#cdcdff">5150,8</div>
<div class="tc" style="left:562px;top:1015.5px;width:48px;background:#cdcdff">5209,6</div>
<div class="tc" style="left:610px;top:1015.5px;width:48px;background:#ccccff">5289,5</div>
<div class="tc" style="left:658px;top:1015.5px;width:48px;background:#ccccff">5359,7</div>
<div class="tc" style="left:706px;top:1015.5px;width:48px;background:#ccccff">5423,6</div>
<div class="tc" style="left:754px;top:1015.5px;width:48px;background:#cbcbff">5529,5</div>
<div class="tc" style="left:802px;top:1015.5px;width:48px;background:#cacaff">5651,7</div>
<div class="tc" style="left:850px;top:1015.5px;width:48px;background:#c9c9ff">5765,8</div>
<div class="tc" style="left:898px;top:1015.5px;width:48px;background:#c9c9ff">5899,9</div>
<div class="tc" style="left:946px;top:1015.5px;width:48px;background:#c6c6ff">6249,4</div>
<div class="tc" style="left:994px;top:1015.5px;width:48px;background:#c6c6ff">6398,5</div>
<div class="tc" style="left:1042px;top:1015.5px;width:48px;background:#c5c5ff">6487,3</div>
<div class="tc" style="left:1090px;top:1015.5px;width:48px;background:#c3c3ff">6737,2</div>
<div class="tc" style="left:1138px;top:1015.5px;width:48px;background:#c1c1ff">7138,4</div>
<div class="tc" style="left:1186px;top:1015.5px;width:48px;background:#c0c0ff">7292,8</div>
<div class="tc" style="left:1234px;top:1015.5px;width:48px;background:#bfbfff">7431,9</div>
<div class="tc" style="left:1282px;top:1015.5px;width:48px;background:#bebeff">7570,1</div>
<div class="tc" style="left:1330px;top:1015.5px;width:48px;background:#bdbdff">7716,5</div>
<div class="tc" style="left:1378px;top:1015.5px;width:48px;background:#bcbcff">7922,2</div>
<div class="tc" style="left:1426px;top:1015.5px;width:48px;background:#bbbbff">8064,7</div>
<div class="tc" style="left:266px;top:1015.5px;width:8px;padding-right:1px;background:#ccccff;overflow:hidden;direction:rtl">6</div>
<div style="left:10px;top:889px;width:1573px;height:1px;background:#000"></div>
<div style="left:10px;top:903px;width:1573px;height:1px;background:#000"></div>
<div style="left:10px;top:917px;width:1573px;height:1px;background:#000"></div>
<div style="left:10px;top:931px;width:1573px;height:1px;background:#000"></div>
<div style="left:10px;top:945px;width:1573px;height:1px;background:#000"></div>
<div style="left:10px;top:959px;width:1573px;height:1px;background:#000"></div>
<div style="left:10px;top:973px;width:1573px;height:1px;background:#000"></div>
<div style="left:10px;top:987px;width:1573px;height:1px;background:#000"></div>
<div style="left:10px;top:1001px;width:1573px;height:1px;background:#000"></div>
<div style="left:10px;top:1015px;width:1573px;height:1px;background:#000"></div>
<div style="left:10px;top:1029px;width:1573px;height:1px;background:#000"></div>
<div style="left:10px;top:889px;width:1px;height:141px;background:#000"></div>
<div style="left:265px;top:903px;width:1px;height:127px;background:#000"></div>
<div style="left:274px;top:903px;width:1px;height:127px;background:#000"></div>
<div style="left:322px;top:903px;width:1px;height:127px;background:#000"></div>
<div style="left:370px;top:903px;width:1px;height:127px;background:#000"></div>
<div style="left:418px;top:889px;width:1px;height:141px;background:#000"></div>
<div style="left:466px;top:889px;width:1px;height:141px;background:#000"></div>
<div style="left:514px;top:903px;width:1px;height:127px;background:#000"></div>
<div style="left:562px;top:889px;width:1px;height:141px;background:#000"></div>
<div style="left:610px;top:889px;width:1px;height:141px;background:#000"></div>
<div style="left:658px;top:903px;width:1px;height:127px;background:#000"></div>
<div style="left:706px;top:889px;width:1px;height:141px;background:#000"></div>
<div style="left:754px;top:889px;width:1px;height:141px;background:#000"></div>
<div style="left:802px;top:903px;width:1px;height:127px;background:#000"></div>
<div style="left:850px;top:889px;width:1px;height:141px;background:#000"></div>
<div style="left:898px;top:889px;width:1px;height:141px;background:#000"></div>
<div style="left:946px;top:903px;width:1px;height:127px;background:#000"></div>
<div style="left:994px;top:889px;width:1px;height:141px;background:#000"></div>
<div style="left:1042px;top:889px;width:1px;height:141px;background:#000"></div>
<div style="left:1090px;top:903px;width:1px;height:127px;background:#000"></div>
<div style="left:1138px;top:889px;width:1px;height:141px;background:#000"></div>
<div style="left:1186px;top:889px;width:1px;height:141px;background:#000"></div>
<div style="left:1234px;top:903px;width:1px;height:127px;background:#000"></div>
<div style="left:1282px;top:889px;width:1px;height:141px;background:#000"></div>
<div style="left:1330px;top:889px;width:1px;height:141px;background:#000"></div>
<div style="left:1378px;top:903px;width:1px;height:127px;background:#000"></div>
<div style="left:1426px;top:889px;width:1px;height:141px;background:#000"></div>
<div style="left:1474px;top:903px;width:1px;height:127px;background:#000"></div>
<div style="left:418px;top:890px;width:1px;height:13px;background:rgba(0,0,0,.45)"></div>
<div style="left:466px;top:890px;width:1px;height:13px;background:rgba(0,0,0,.45)"></div>
<div style="left:562px;top:890px;width:1px;height:13px;background:rgba(0,0,0,.45)"></div>
<div style="left:610px;top:890px;width:1px;height:13px;background:rgba(0,0,0,.45)"></div>
<div style="left:706px;top:890px;width:1px;height:13px;background:rgba(0,0,0,.45)"></div>
<div style="left:754px;top:890px;width:1px;height:13px;background:rgba(0,0,0,.45)"></div>
<div style="left:850px;top:890px;width:1px;height:13px;background:rgba(0,0,0,.45)"></div>
<div style="left:898px;top:890px;width:1px;height:13px;background:rgba(0,0,0,.45)"></div>
<div style="left:994px;top:890px;width:1px;height:13px;background:rgba(0,0,0,.45)"></div>
<div style="left:1042px;top:890px;width:1px;height:13px;background:rgba(0,0,0,.45)"></div>
<div style="left:1138px;top:890px;width:1px;height:13px;background:rgba(0,0,0,.45)"></div>
<div style="left:1186px;top:890px;width:1px;height:13px;background:rgba(0,0,0,.45)"></div>
<div style="left:1282px;top:890px;width:1px;height:13px;background:rgba(0,0,0,.45)"></div>
<div style="left:1330px;top:890px;width:1px;height:13px;background:rgba(0,0,0,.45)"></div>
<div style="left:1426px;top:890px;width:1px;height:13px;background:rgba(0,0,0,.45)"></div>
<div style="left:418px;top:888px;width:240px;height:1px;background:#a8f8a8"></div>
<div style="left:419px;top:889px;width:47px;height:1px;background:#008b8b"></div>
<div style="left:467px;top:889px;width:47px;height:1px;background:#008b8b"></div>
<div style="left:515px;top:889px;width:47px;height:1px;background:#8b0000"></div>
<div style="left:563px;top:889px;width:47px;height:1px;background:#8b0000"></div>
<div style="left:611px;top:889px;width:47px;height:1px;background:#8b0000"></div>
<div class="ax" style="left:11px;top:1016.3px;font-size:11.4px;color:#000">©2014 NinjaTrader, LLC</div>
<div style="left:1583px;top:99px;width:6px;height:1px;background:#000"></div>
<div class="ax" style="left:1590px;top:94.0px">1,3770</div>
<div style="left:1583px;top:167px;width:6px;height:1px;background:#000"></div>
<div class="ax" style="left:1590px;top:162.0px">1,3765</div>
<div style="left:1583px;top:236px;width:6px;height:1px;background:#000"></div>
<div class="ax" style="left:1590px;top:231.0px">1,3760</div>
<div style="left:1583px;top:304px;width:6px;height:1px;background:#000"></div>
<div class="ax" style="left:1590px;top:299.0px">1,3755</div>
<div style="left:1583px;top:373px;width:6px;height:1px;background:#000"></div>
<div class="ax" style="left:1590px;top:368.0px">1,3750</div>
<div style="left:1583px;top:441px;width:6px;height:1px;background:#000"></div>
<div class="ax" style="left:1590px;top:436.0px">1,3745</div>
<div style="left:1583px;top:510px;width:6px;height:1px;background:#000"></div>
<div class="ax" style="left:1590px;top:505.0px">1,3740</div>
<div style="left:1583px;top:578px;width:6px;height:1px;background:#000"></div>
<div class="ax" style="left:1590px;top:573.0px">1,3735</div>
<div style="left:1583px;top:647px;width:6px;height:1px;background:#000"></div>
<div class="ax" style="left:1590px;top:642.0px">1,3730</div>
<div style="left:1583px;top:715px;width:6px;height:1px;background:#000"></div>
<div class="ax" style="left:1590px;top:710.0px">1,3725</div>
<div style="left:1583px;top:784px;width:6px;height:1px;background:#000"></div>
<div class="ax" style="left:1590px;top:779.0px">1,3720</div>
<div style="left:1583px;top:852px;width:6px;height:1px;background:#000"></div>
<div class="ax" style="left:1590px;top:847.0px">1,3715</div>
<div style="left:1583px;top:921px;width:6px;height:1px;background:#000"></div>
<div class="ax" style="left:1590px;top:916.0px">1,3710</div>
<div style="left:1583px;top:989px;width:6px;height:1px;background:#000"></div>
<div class="ax" style="left:1590px;top:984.0px">1,3705</div>
<svg style="left:1582px;top:255.0px" width="46" height="16" viewBox="0 0 46 16"><path d="M1.2 8L7.5 1H43.5V15H7.5Z" fill="#a0a0a0" stroke="#000" stroke-width="1.2"/></svg>
<div class="ax" style="left:1592px;top:257.5px;color:#000">1,3758</div>
<div style="left:55px;top:1030px;width:1px;height:4px;background:#000"></div>
<div class="ax" style="left:34.8px;top:1035.8px;width:40px;text-align:center">14:30</div>
<div style="left:127px;top:1030px;width:1px;height:4px;background:#000"></div>
<div class="ax" style="left:106.8px;top:1035.8px;width:40px;text-align:center">14:45</div>
<div style="left:199px;top:1030px;width:1px;height:4px;background:#000"></div>
<div class="ax" style="left:178.8px;top:1035.8px;width:40px;text-align:center">15:00</div>
<div style="left:271px;top:1030px;width:1px;height:4px;background:#000"></div>
<div class="ax" style="left:250.8px;top:1035.8px;width:40px;text-align:center">15:15</div>
<div style="left:343px;top:1030px;width:1px;height:4px;background:#000"></div>
<div class="ax" style="left:322.8px;top:1035.8px;width:40px;text-align:center">15:30</div>
<div style="left:415px;top:1030px;width:1px;height:4px;background:#000"></div>
<div class="ax" style="left:394.8px;top:1035.8px;width:40px;text-align:center">15:45</div>
<div style="left:487px;top:1030px;width:1px;height:4px;background:#000"></div>
<div class="ax" style="left:466.8px;top:1035.8px;width:40px;text-align:center">16:00</div>
<div style="left:559px;top:1030px;width:1px;height:4px;background:#000"></div>
<div class="ax" style="left:538.8px;top:1035.8px;width:40px;text-align:center">16:15</div>
<div style="left:631px;top:1030px;width:1px;height:4px;background:#000"></div>
<div class="ax" style="left:610.8px;top:1035.8px;width:40px;text-align:center">16:30</div>
<div style="left:703px;top:1030px;width:1px;height:4px;background:#000"></div>
<div class="ax" style="left:682.8px;top:1035.8px;width:40px;text-align:center">16:45</div>
<div style="left:775px;top:1030px;width:1px;height:4px;background:#000"></div>
<div class="ax" style="left:754.8px;top:1035.8px;width:40px;text-align:center">17:00</div>
<div style="left:847px;top:1030px;width:1px;height:4px;background:#000"></div>
<div class="ax" style="left:826.8px;top:1035.8px;width:40px;text-align:center">17:15</div>
<div style="left:919px;top:1030px;width:1px;height:4px;background:#000"></div>
<div class="ax" style="left:898.8px;top:1035.8px;width:40px;text-align:center">17:30</div>
<div style="left:991px;top:1030px;width:1px;height:4px;background:#000"></div>
<div class="ax" style="left:970.8px;top:1035.8px;width:40px;text-align:center">17:45</div>
<div style="left:1063px;top:1030px;width:1px;height:4px;background:#000"></div>
<div class="ax" style="left:1042.8px;top:1035.8px;width:40px;text-align:center">18:00</div>
<div style="left:1135px;top:1030px;width:1px;height:4px;background:#000"></div>
<div class="ax" style="left:1114.8px;top:1035.8px;width:40px;text-align:center">18:15</div>
<div style="left:1207px;top:1030px;width:1px;height:4px;background:#000"></div>
<div class="ax" style="left:1186.8px;top:1035.8px;width:40px;text-align:center">18:30</div>
<div style="left:1279px;top:1030px;width:1px;height:4px;background:#000"></div>
<div class="ax" style="left:1258.8px;top:1035.8px;width:40px;text-align:center">18:45</div>
<div style="left:1351px;top:1030px;width:1px;height:4px;background:#000"></div>
<div class="ax" style="left:1330.8px;top:1035.8px;width:40px;text-align:center">19:00</div>
<div style="left:8px;top:1057px;width:1628px;height:23px;background:linear-gradient(#e2e2e2 0,#ececec 2px,#ededed 100%)"></div>
<svg style="left:13.8px;top:1063.6px" width="5" height="8" viewBox="0 0 5 8"><path d="M4.5 0.2V7.8L0.3 4Z" fill="#303030"/></svg>
<svg style="left:1626.3px;top:1063.6px" width="5" height="8" viewBox="0 0 5 8"><path d="M0.5 0.2V7.8L4.7 4Z" fill="#303030"/></svg>
<div style="left:1579.5px;top:1057px;width:14.5px;height:22px;border:1px solid #9a9a9a;border-radius:2px;background:linear-gradient(#f4f4f4,#e2e2e2 50%,#d2d2d2 51%,#dcdcdc)"></div>
<svg style="left:1552px;top:65.5px" width="22" height="21" viewBox="0 0 22 21"><path d="M0.3 0.6L15.5 10.2L0.3 19.8Z" fill="#000"/><rect x="17.6" y="0.5" width="3" height="19.5" fill="#000"/></svg>
<div id="wm1" style="transform:scaleX(.784);left:1272px;top:827.5px;font-family:'Liberation Serif',serif;font-weight:bold;transform-origin:0 0;-webkit-text-stroke:0.5px #2a0000;font-size:27px;line-height:30px;color:#9a1010;text-shadow:1px 1px 0 #000,2px 2px 1px #111,-0.5px -0.5px 0 #200;letter-spacing:0.5px">WWW.FOREX-WAREZ.COM</div>
<div id="wm2a" style="transform:scaleX(.8726);left:1272px;top:854px;font-family:'Liberation Serif',serif;font-weight:bold;transform-origin:0 0;-webkit-text-stroke:0.5px #2a0000;font-size:12.5px;line-height:14px;color:#8a0c0c;text-shadow:1px 1px 0 #000,1.5px 1.5px 1px #222;">ANDREYBBRV@GMAIL.COM</div>
<div id="wm2b" style="transform:scaleX(.926);left:1436px;top:854px;font-family:'Liberation Serif',serif;font-weight:bold;transform-origin:0 0;-webkit-text-stroke:0.5px #2a0000;font-size:12.5px;line-height:14px;color:#8a0c0c;text-shadow:1px 1px 0 #000,1.5px 1.5px 1px #222;">SKYPE: ANDREYBBRV</div>
<div style="left:529.0px;top:302.0px;width:585.5px;height:484.5px;background:#b9d1ea;border:1px solid #1e1e1e;box-shadow:inset 0 0 0 1px #d8e6f4;"></div>
<div style="left:530.0px;top:303.0px;width:583.5px;height:25px;background:linear-gradient(#98b4d4 0,#a9c2de 45%,#bdd2ea 100%);"></div>
<div class="tb" id="dt" style="left:537px;top:310.5px;font-size:12px;color:#000">Indicators</div>
<div style="left:1092px;top:311px;width:13px;height:13px;border:1px solid #5a2a28;border-radius:2.5px;background:linear-gradient(#d89a94,#c4665e 50%,#b85048 51%,#c87068);box-shadow:inset 0 0 0 1px rgba(255,255,255,.35)"></div>
<svg style="left:1095px;top:314px" width="7" height="7" viewBox="0 0 7 7"><path d="M0.8 0.8L6.2 6.2M6.2 0.8L0.8 6.2" stroke="#3a2020" stroke-width="2.6"/><path d="M0.8 0.8L6.2 6.2M6.2 0.8L0.8 6.2" stroke="#fff" stroke-width="1.3"/></svg>
<div style="left:537.5px;top:327px;width:568.5px;height:452px;background:#f0f0f0"></div>
<div style="left:537.5px;top:327px;width:1.5px;height:386px;background:#6a6a6a"></div>
<div style="left:537.5px;top:327px;width:568px;height:1.5px;background:#6a6a6a"></div>
<div style="left:537.5px;top:712.5px;width:568.5px;height:1px;background:#fafafa"></div>
<div style="left:539.5px;top:328.5px;width:250.5px;height:212px;background:#fff;border:1px solid #828790;"></div>
<div class="li" style="left:545.6px;top:331.5px">[LT] DivDelta</div>
<div class="li" style="left:545.6px;top:344.5px">[LT] Market Profile Plus</div>
<div class="li" style="left:545.6px;top:357.5px">[LT] Order Flow Chart</div>
<div class="li" style="left:545.6px;top:370.5px">[LT] VWAP Market Profile</div>
<div class="li" style="left:545.6px;top:383.5px">MarketBalance</div>
<div class="li" style="left:545.6px;top:396.5px">OFA/EXA</div>
<div class="li" style="left:545.6px;top:409.5px">OFA/MOA</div>
<div class="li" style="left:545.6px;top:422.5px">OFA/Ninja</div>
<div class="li" style="left:545.6px;top:435.5px">OFA/SRA</div>
<div class="li" style="left:545.6px;top:448.5px">OFA/VCA</div>
<div class="li" style="left:545.6px;top:461.5px">TPO and Volume Profile Chart</div>
<div class="li" style="left:545.6px;top:474.5px">TPO and Volume Profile Chart (v4)</div>
<div class="li" style="left:543.0px;top:487.5px">_BetterProAm</div>
<div class="li" style="left:543.0px;top:500.5px">_BetterProAmPB</div>
<div class="li" style="left:543.0px;top:513.5px">_BetterProAmSM</div>
<div class="li" style="left:543.0px;top:526.5px">AcmeVolumeImpression</div>
<div style="left:772px;top:330px;width:17px;height:209px;background:#f0f0f0"></div>
<svg style="left:777px;top:337.5px" width="7" height="4" viewBox="0 0 7 4"><path d="M0 4L3.5 0L7 4Z" fill="#404040"/></svg>
<svg style="left:777px;top:529px" width="7" height="4" viewBox="0 0 7 4"><path d="M0 0L3.5 4L7 0Z" fill="#404040"/></svg>
<div style="left:773px;top:349.5px;width:15px;height:14.5px;border:1px solid #979797;border-radius:2px;background:linear-gradient(90deg,#f6f6f6,#e8e8e8 50%,#d4d4d4 51%,#dedede)"></div>
<div style="left:539.5px;top:546px;width:250.5px;height:120.5px;background:#fff;border:1px solid #828790;"></div>
<div style="left:541.2px;top:548px;width:247px;height:13px;background:#3399ff"></div>
<div class="li" style="left:545.6px;top:548px;color:#fff">MarketBalance</div>
<div class="btn" style="left:562.0px;top:683.3px;width:66.0px;height:22.5px;color:#838383;background:#f4f4f4;border-color:#adb2b5;">New</div>
<div class="btn" style="left:699.0px;top:683.3px;width:66.0px;height:22.5px;">Remove</div>
<div class="btn" style="left:626.3px;top:743.3px;width:78.6px;height:22.6px;border-color:#3c7fb1;box-shadow:inset 0 0 0 1px #48d8fa,inset 0 0 0 2px #c4eefa;font-size:12px">OK</div>
<div class="btn" style="left:783.0px;top:743.3px;width:77.8px;height:22.6px;">Apply</div>
<div class="btn" style="left:940.0px;top:743.3px;width:77.8px;height:22.6px;font-size:11.5px">Close</div>
<div style="left:1101px;top:775px;width:2px;height:2px;background:#b8b8b8"></div>
<div style="left:1101px;top:772px;width:2px;height:2px;background:#b8b8b8"></div>
<div style="left:1098px;top:775px;width:2px;height:2px;background:#b8b8b8"></div>
<div style="left:1101px;top:769px;width:2px;height:2px;background:#b8b8b8"></div>
<div style="left:1098px;top:772px;width:2px;height:2px;background:#b8b8b8"></div>
<div style="left:1095px;top:775px;width:2px;height:2px;background:#b8b8b8"></div>
<div style="left:846.5px;top:328.5px;width:258.5px;height:321px;background:#fff;border:1px solid #828790;border-top:2px solid #6a6a6a;"></div>
<div style="left:847.5px;top:330.5px;width:13.3px;height:318px;background:#c8c8c8"></div>
<div class="pn" style="left:860.8px;top:330.6px;width:106px;overflow:hidden;padding-left:3px;background:transparent"><span style="display:inline-block;transform:scaleX(1.02);transform-origin:0 50%">Show Volume</span></div>
<div class="pv" style="left:971.5px;top:330.6px;width:115.8px;overflow:hidden"><span style="transform:scaleX(1.080)">True</span></div>
<div style="left:860.8px;top:346.0px;width:226.5px;height:1px;background:#d0d0d0"></div>
<div style="left:966.6px;top:330.6px;width:1px;height:16px;background:#d0d0d0"></div>
<div style="left:847.5px;top:346.6px;width:240px;height:16px;background:#c8c8c8"></div>
<div style="left:848.6px;top:350.3px;width:9px;height:9px;border:1px solid #444;background:#fff"></div>
<div style="left:850.6px;top:354.3px;width:5px;height:1px;background:#000"></div>
<div class="pv" style="left:864px;top:346.6px;"><span style="transform:scaleX(1.110)">TPO</span></div>
<div class="pn" style="left:860.8px;top:362.6px;width:106px;overflow:hidden;padding-left:3px;background:transparent"><span style="display:inline-block;transform:scaleX(1.02);transform-origin:0 50%">TPO Chars</span></div>
<div class="pv" style="left:971.5px;top:362.6px;width:115.8px;overflow:hidden"><span style="transform:scaleX(1.067)">ABCDEFGHIJKLMNP</span></div>
<div style="left:860.8px;top:378.0px;width:226.5px;height:1px;background:#d0d0d0"></div>
<div style="left:966.6px;top:362.6px;width:1px;height:16px;background:#d0d0d0"></div>
<div class="pn" style="left:860.8px;top:378.6px;width:106px;overflow:hidden;padding-left:3px;background:transparent"><span style="display:inline-block;transform:scaleX(1.02);transform-origin:0 50%">TPO Size (In minuets</span></div>
<div class="pv" style="left:971.5px;top:378.6px;width:115.8px;overflow:hidden"><span style="transform:scaleX(1.150)">30</span></div>
<div style="left:860.8px;top:394.0px;width:226.5px;height:1px;background:#d0d0d0"></div>
<div style="left:966.6px;top:378.6px;width:1px;height:16px;background:#d0d0d0"></div>
<div style="left:847.5px;top:394.6px;width:240px;height:16px;background:#c8c8c8"></div>
<div style="left:848.6px;top:398.3px;width:9px;height:9px;border:1px solid #444;background:#fff"></div>
<div style="left:850.6px;top:402.3px;width:5px;height:1px;background:#000"></div>
<div class="pv" style="left:864px;top:394.6px;"><span style="transform:scaleX(1.060)">Value Area</span></div>
<div class="pn" style="left:860.8px;top:410.6px;width:106px;overflow:hidden;padding-left:3px;background:transparent"><span style="display:inline-block;transform:scaleX(1.02);transform-origin:0 50%">Calculation</span></div>
<div class="pv" style="left:971.5px;top:410.6px;width:115.8px;overflow:hidden"><span style="transform:scaleX(1.098)">VWAP</span></div>
<div style="left:860.8px;top:426.0px;width:226.5px;height:1px;background:#d0d0d0"></div>
<div style="left:966.6px;top:410.6px;width:1px;height:16px;background:#d0d0d0"></div>
<div class="pn" style="left:860.8px;top:426.6px;width:106px;overflow:hidden;padding-left:3px;background:transparent"><span style="display:inline-block;transform:scaleX(1.02);transform-origin:0 50%">POC (Point of Control</span></div>
<div style="left:969px;top:428.4px;width:20px;height:12.5px;border:1px solid #000;background:#00ff00"></div>
<div class="pv" style="left:997.0px;top:426.6px;width:90.3px;overflow:hidden"><span style="transform:scaleX(0.965)">Lime</span></div>
<div style="left:860.8px;top:442.0px;width:226.5px;height:1px;background:#d0d0d0"></div>
<div style="left:966.6px;top:426.6px;width:1px;height:16px;background:#d0d0d0"></div>
<div class="pn" style="left:860.8px;top:442.6px;width:106px;overflow:hidden;padding-left:3px;background:transparent"><span style="display:inline-block;transform:scaleX(1.02);transform-origin:0 50%">Show Value Area Line</span></div>
<div class="pv" style="left:971.5px;top:442.6px;width:115.8px;overflow:hidden"><span style="transform:scaleX(1.080)">True</span></div>
<div style="left:860.8px;top:458.0px;width:226.5px;height:1px;background:#d0d0d0"></div>
<div style="left:966.6px;top:442.6px;width:1px;height:16px;background:#d0d0d0"></div>
<div class="pn" style="left:860.8px;top:458.6px;width:106px;overflow:hidden;padding-left:3px;background:transparent"><span style="display:inline-block;transform:scaleX(1.02);transform-origin:0 50%">Value Area Color</span></div>
<div style="left:969px;top:460.4px;width:20px;height:12.5px;border:1px solid #000;background:#ffff00"></div>
<div class="pv" style="left:997.0px;top:458.6px;width:90.3px;overflow:hidden"><span style="transform:scaleX(1.050)">Yellow</span></div>
<div style="left:860.8px;top:474.0px;width:226.5px;height:1px;background:#d0d0d0"></div>
<div style="left:966.6px;top:458.6px;width:1px;height:16px;background:#d0d0d0"></div>
<div class="pn" style="left:860.8px;top:474.6px;width:106px;overflow:hidden;padding-left:3px;background:transparent"><span style="display:inline-block;transform:scaleX(1.02);transform-origin:0 50%">Value Area Size (%)</span></div>
<div class="pv" style="left:971.5px;top:474.6px;width:115.8px;overflow:hidden"><span style="transform:scaleX(1.150)">68</span></div>
<div style="left:860.8px;top:490.0px;width:226.5px;height:1px;background:#d0d0d0"></div>
<div style="left:966.6px;top:474.6px;width:1px;height:16px;background:#d0d0d0"></div>
<div style="left:847.5px;top:490.6px;width:240px;height:16px;background:#c8c8c8"></div>
<div style="left:848.6px;top:494.3px;width:9px;height:9px;border:1px solid #444;background:#fff"></div>
<div style="left:850.6px;top:498.3px;width:5px;height:1px;background:#000"></div>
<div class="pv" style="left:864px;top:490.6px;"><span style="transform:scaleX(1.100)">Data</span></div>
<div class="pn" style="left:860.8px;top:506.6px;width:106px;overflow:hidden;padding-left:3px;background:transparent"><span style="display:inline-block;transform:scaleX(1.02);transform-origin:0 50%">Calculate on bar close</span></div>
<div class="pv" style="left:971.5px;top:506.6px;width:115.8px;overflow:hidden"><span style="transform:scaleX(1.038)">False</span></div>
<div style="left:860.8px;top:522.0px;width:226.5px;height:1px;background:#d0d0d0"></div>
<div style="left:966.6px;top:506.6px;width:1px;height:16px;background:#d0d0d0"></div>
<div class="pn" style="left:860.8px;top:522.6px;width:106px;overflow:hidden;padding-left:3px;background:transparent"><span style="display:inline-block;transform:scaleX(1.02);transform-origin:0 50%">Input series</span></div>
<div class="pv" style="left:971.5px;top:522.6px;width:115.8px;overflow:hidden"><span style="transform:scaleX(1.123)">$EURUSD (10 Min)</span></div>
<div style="left:860.8px;top:538.0px;width:226.5px;height:1px;background:#d0d0d0"></div>
<div style="left:966.6px;top:522.6px;width:1px;height:16px;background:#d0d0d0"></div>
<div class="pn" style="left:860.8px;top:538.6px;width:106px;overflow:hidden;padding-left:3px;background:transparent"><span style="display:inline-block;transform:scaleX(1.02);transform-origin:0 50%">Maximum bars look b</span></div>
<div class="pv" style="left:971.5px;top:538.6px;width:115.8px;overflow:hidden"><span style="transform:scaleX(1.063)">TwoHundredFiftySix</span></div>
<div style="left:860.8px;top:554.0px;width:226.5px;height:1px;background:#d0d0d0"></div>
<div style="left:966.6px;top:538.6px;width:1px;height:16px;background:#d0d0d0"></div>
<div style="left:847.5px;top:554.6px;width:240px;height:16px;background:#c8c8c8"></div>
<div style="left:848.6px;top:558.3px;width:9px;height:9px;border:1px solid #444;background:#fff"></div>
<div style="left:850.6px;top:562.3px;width:5px;height:1px;background:#000"></div>
<div class="pv" style="left:864px;top:554.6px;"><span style="transform:scaleX(1.052)">Visual</span></div>
<div class="pn" style="left:860.8px;top:570.6px;width:106px;overflow:hidden;padding-left:3px;background:transparent"><span style="display:inline-block;transform:scaleX(1.02);transform-origin:0 50%">Auto scale</span></div>
<div class="pv" style="left:971.5px;top:570.6px;width:115.8px;overflow:hidden"><span style="transform:scaleX(1.080)">True</span></div>
<div style="left:860.8px;top:586.0px;width:226.5px;height:1px;background:#d0d0d0"></div>
<div style="left:966.6px;top:570.6px;width:1px;height:16px;background:#d0d0d0"></div>
<div class="pn" style="left:860.8px;top:586.6px;width:106px;overflow:hidden;padding-left:3px;background:transparent"><span style="display:inline-block;transform:scaleX(1.02);transform-origin:0 50%">Displacement</span></div>
<div class="pv" style="left:971.5px;top:586.6px;width:115.8px;overflow:hidden"><span style="transform:scaleX(1.060)">0</span></div>
<div style="left:860.8px;top:602.0px;width:226.5px;height:1px;background:#d0d0d0"></div>
<div style="left:966.6px;top:586.6px;width:1px;height:16px;background:#d0d0d0"></div>
<div class="pn" style="left:860.8px;top:602.6px;width:106px;overflow:hidden;padding-left:3px;background:transparent"><span style="display:inline-block;transform:scaleX(1.02);transform-origin:0 50%">Display in Data Box</span></div>
<div class="pv" style="left:971.5px;top:602.6px;width:115.8px;overflow:hidden"><span style="transform:scaleX(1.038)">False</span></div>
<div style="left:860.8px;top:618.0px;width:226.5px;height:1px;background:#d0d0d0"></div>
<div style="left:966.6px;top:602.6px;width:1px;height:16px;background:#d0d0d0"></div>
<div class="pn" style="left:860.8px;top:618.6px;width:106px;overflow:hidden;padding-left:3px;background:#c8c8c8"><span style="display:inline-block;transform:scaleX(1.02);transform-origin:0 50%">Label</span></div>
<div class="pv" style="left:975.5px;top:618.6px;width:111.8px;overflow:hidden"><span style="transform:scaleX(1.080)">MarketBalance</span></div>
<div style="left:860.8px;top:634.0px;width:226.5px;height:1px;background:#d0d0d0"></div>
<div style="left:966.6px;top:618.6px;width:1px;height:16px;background:#d0d0d0"></div>
<div class="pn" style="left:860.8px;top:634.6px;width:106px;overflow:hidden;padding-left:3px;background:transparent"><span style="display:inline-block;transform:scaleX(1.02);transform-origin:0 50%">Panel</span></div>
<div class="pv" style="left:971.5px;top:634.6px;width:115.8px;overflow:hidden"><span style="transform:scaleX(1.060)">Same as input series</span></div>
<div style="left:860.8px;top:650.0px;width:226.5px;height:1px;background:#d0d0d0"></div>
<div style="left:966.6px;top:634.6px;width:1px;height:16px;background:#d0d0d0"></div>
<div style="left:1087.5px;top:330.5px;width:16.5px;height:318px;background:#f0f0f0"></div>
<svg style="left:1092.5px;top:338px" width="7" height="4" viewBox="0 0 7 4"><path d="M0 4L3.5 0L7 4Z" fill="#404040"/></svg>
<svg style="left:1092.5px;top:639px" width="7" height="4" viewBox="0 0 7 4"><path d="M0 0L3.5 4L7 0Z" fill="#404040"/></svg>
<div style="left:1088px;top:522.3px;width:15px;height:75px;border:1px solid #979797;border-radius:2px;background:linear-gradient(90deg,#f6f6f6,#e8e8e8 50%,#d4d4d4 51%,#dedede)"></div>
<div style="left:1092px;top:556.5px;width:7px;height:1px;background:#777"></div>
<div style="left:1092px;top:558.5px;width:7px;height:1px;background:#777"></div>
<div style="left:1092px;top:560.5px;width:7px;height:1px;background:#777"></div>
<div style="left:1092px;top:562.5px;width:7px;height:1px;background:#777"></div>
<div style="left:846.3px;top:653.3px;width:258.8px;height:58px;background:#f0f0f0;border:1px solid #9a9a9a"></div>
<div class="pv" style="left:851px;top:654.6px;"><span style="transform:scaleX(1.065)">Label</span></div>
<div class="pn" style="left:851px;top:669.6px">Market Balance</div>
</body></html>
